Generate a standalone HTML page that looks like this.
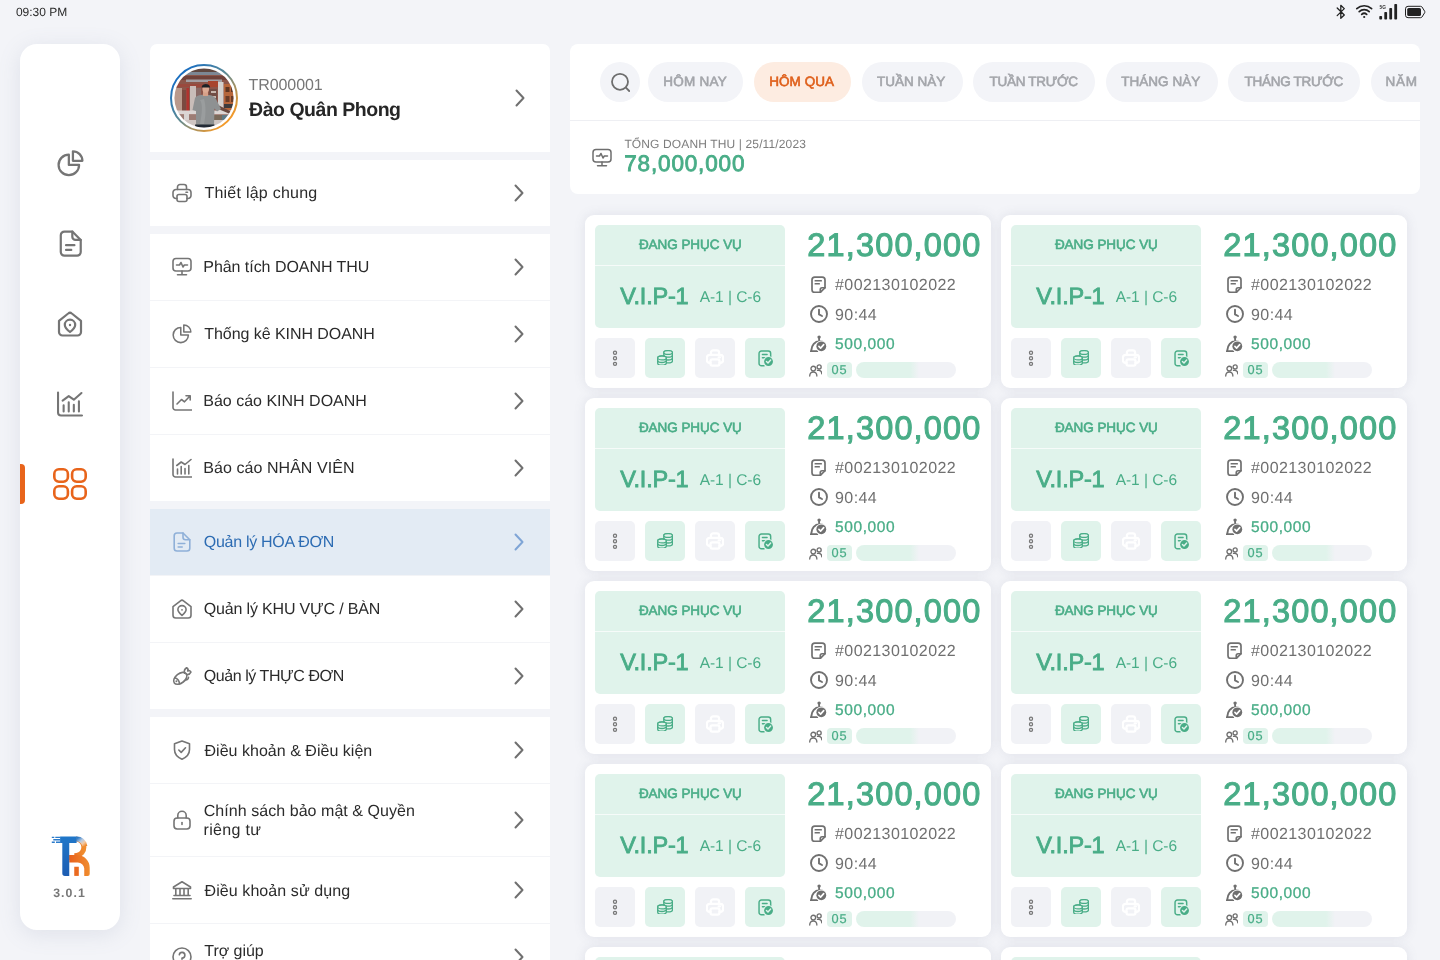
<!DOCTYPE html>
<html lang="vi"><head><meta charset="utf-8"><title>Quản lý hóa đơn</title>
<style>
*{box-sizing:border-box;margin:0;padding:0}
html,body{width:1440px;height:960px;overflow:hidden}
body{background:#f3f4f8;font-family:"Liberation Sans","DejaVu Sans",sans-serif;color:#2b2b2b;position:relative}
#root{position:absolute;left:0;top:0;width:1440px;height:960px;will-change:transform}
.abs{position:absolute}
.t{position:absolute;white-space:nowrap;line-height:1;text-rendering:geometricPrecision}
.side{left:20px;top:44px;width:100px;height:886px;border-radius:17px;background:#fff;box-shadow:0 4px 22px rgba(120,130,160,.16)}
.menu{left:150px;width:400px;background:#fff}
.row{position:absolute;left:150px;width:400px;background:#fff}
.row.hl{background:#e3ebf4}
.row svg.ic{position:absolute;left:22px}
.chev{position:absolute;left:364px}
.hdr{left:570px;top:44px;width:850px;height:150px;background:#fff;border-radius:8px;overflow:hidden}
.chip{position:absolute;top:18px;height:40px;border-radius:20px;background:#f3f4f8;color:#a3a5aa;font-size:14px}
.chip.on{background:#fdece1;color:#df5f1a}
.card{position:absolute;width:406px;height:173px;background:#fff;border-radius:9px;box-shadow:0 0 12px rgba(100,108,135,.135)}
.gb{position:absolute;left:10px;top:10px;width:190px;height:103px;border-radius:5px;background:#e0f3eb}
.gb i{position:absolute;left:0;top:40px;width:190px;height:1px;background:#f6fbf9}
.btn{position:absolute;top:123px;width:40px;height:40px;border-radius:5px}
.btn svg{position:absolute}
.md{font-weight:normal;-webkit-text-stroke:.45px currentColor}
.green{color:#49ad87}
.gray{color:#707070}
</style></head>
<body>
<div id="root">
<div class="t" id="time" style="left:15.90px;top:6.04px;font-size:12px;letter-spacing:-0.007px;color:#2b2b2b">09:30 PM</div>
<svg width="100" height="24" viewBox="0 0 100 24" style="position:absolute;left:1330px;top:0"><g fill="none" stroke="#222" stroke-width="1.300" stroke-linecap="round" stroke-linejoin="round"><path d="M7.200 8 L14.300 15 L10.800 18.300 V5.300 L14.300 8.600 L7.200 15.600"/></g><g fill="none" stroke="#222" stroke-width="1.700" stroke-linecap="round"><path d="M26.800 8.600 A11 11 0 0 1 41.600 8.600"/><path d="M29.200 11.600 A7.300 7.300 0 0 1 39.200 11.600"/><path d="M31.700 14.400 A3.700 3.700 0 0 1 36.700 14.400"/></g><circle cx="34.200" cy="17" r="1.100" fill="#222"/><g fill="#222"><rect x="49.300" y="16" width="2.800" height="3.600" rx="0.800"/><rect x="54.300" y="12" width="2.800" height="7.600" rx="0.800"/><rect x="59.300" y="8" width="2.800" height="11.600" rx="0.800"/><rect x="64.300" y="4" width="2.800" height="15.600" rx="0.800"/></g><text x="49.600" y="9.300" font-family="Liberation Sans, sans-serif" font-size="4.800" font-weight="bold" fill="#333">5G</text><path d="M78 6.300 H90.500 A2 2 0 0 1 92 7 L94.700 11.300 A1.200 1.200 0 0 1 94.700 12.700 L92 17 A2 2 0 0 1 90.500 17.700 H78 A2.500 2.500 0 0 1 75.500 15.200 V8.800 A2.500 2.500 0 0 1 78 6.300 Z" fill="none" stroke="#222" stroke-width="1"/><rect x="77.200" y="8" width="13.800" height="8" rx="1.600" fill="#222"/></svg>
<div class="abs side"></div>
<div class="abs" style="left:20px;top:464px;width:5px;height:40px;background:#e8641b;border-radius:0 4px 4px 0"></div>
<svg width="27" height="27" viewBox="0 0 24 24.500" style="position:absolute;left:56.500px;top:150px"><g fill="none" stroke="#757575" stroke-width="2.05" stroke-linejoin="round" stroke-linecap="round"><path d="M10.5 4.2 A9.3 9.3 0 1 0 19.8 13.5 H10.5 Z"/><path d="M14.2 1.2 A8.6 8.6 0 0 1 22.8 9.8 H14.2 Z"/></g></svg>
<svg width="25.5" height="27.3" viewBox="0 0 24 26" style="position:absolute;left:58px;top:230.100px"><g fill="none" stroke="#757575" stroke-width="2.1" stroke-linejoin="round" stroke-linecap="round"><path d="M13.5 1.5 H6 A3.5 3.5 0 0 0 2.5 5 V21 A3.5 3.5 0 0 0 6 24.5 H18 A3.5 3.5 0 0 0 21.500 21 V9.5 Z"/><path d="M13.5 1.5 V6.5 A3 3 0 0 0 16.5 9.5 H21.5"/><path d="M7.500 14.5 H15.5 M7.500 19 H12.5"/></g></svg>
<svg width="26" height="26" viewBox="0 0 26 26" style="position:absolute;left:57px;top:310.500px"><g fill="none" stroke="#757575" stroke-width="2.2" stroke-linejoin="round" stroke-linecap="round"><path d="M2 9.800 L11.2 2.500 A2.800 2.800 0 0 1 14.800 2.500 L24 9.800 V21 A3.500 3.500 0 0 1 20.500 24.500 H5.500 A3.500 3.500 0 0 1 2 21 Z"/><path d="M13 21 C9.600 18.200 7.800 16.400 7.800 13.900 A5.200 5.200 0 0 1 18.200 13.900 C18.200 16.400 16.400 18.200 13 21 Z"/><circle cx="13" cy="14" r="1.200" fill="#757575" stroke="none"/></g></svg>
<svg width="27.5" height="26" viewBox="0 0 27 25.500" style="position:absolute;left:55.500px;top:390.500px"><g fill="none" stroke="#757575" stroke-width="2.05" stroke-linejoin="round" stroke-linecap="round"><path d="M2 1.500 V21 A3 3 0 0 0 5 24 H25.500"/><path d="M7.500 14 V20 M12.5 11 V20 M17.5 13.5 V20 M22.5 10 V20"/><path d="M6.500 9.500 L12.5 5 L17.5 8.500 L25 2"/></g></svg>
<svg width="34" height="32" viewBox="0 0 34 32" style="position:absolute;left:53px;top:467.500px"><g fill="none" stroke="#e8641b" stroke-width="2.6"><rect x="1.3" y="1.3" width="13.6" height="12.4" rx="4.600" ry="4.600"/><rect x="19.1" y="1.3" width="13.6" height="12.4" rx="4.600" ry="4.600"/><rect x="1.3" y="18.3" width="13.6" height="12.4" rx="4.600" ry="4.600"/><rect x="19.1" y="18.3" width="13.6" height="12.4" rx="4.600" ry="4.600"/></g></svg>
<svg width="40" height="42" viewBox="0 0 40 42" style="position:absolute;left:50.500px;top:834.500px"><defs><linearGradient id="lb" x1="0" y1="0" x2="0" y2="1"><stop offset="0" stop-color="#2077c9"/><stop offset="1" stop-color="#1d5db2"/></linearGradient><linearGradient id="lo" x1="0" y1="0" x2="1" y2="0"><stop offset="0" stop-color="#e8601c"/><stop offset="1" stop-color="#f08d2e"/></linearGradient><linearGradient id="lw" x1="0" y1="0" x2="1" y2="1"><stop offset="0" stop-color="#2d7bc8"/><stop offset="0.400" stop-color="#b9cbe2"/><stop offset="0.700" stop-color="#f3c9a2"/><stop offset="1" stop-color="#ef8a2e"/></linearGradient></defs><path d="M25.300 4.100 A8.200 8.200 0 0 1 25.800 20.400 L25.800 22.600 H18.250" fill="none" stroke="url(#lo)" stroke-width="5"/><path d="M25.300 4.100 A8.100 8.100 0 0 1 33.900 11.300" fill="none" stroke="url(#lw)" stroke-width="5"/><path d="M18.250 20.100 H26 A12.700 12.700 0 0 1 38.700 32.800 V38.900 A2 2 0 0 1 36.700 40.900 H33.250 V33.500 A6.500 6.500 0 0 0 26.750 27.500 H18.250 Z" fill="url(#lo)"/><rect x="23.250" y="31.750" width="4.550" height="9.150" fill="#ea6a20"/><path d="M9.100 1.600 H25.600 V8 H18.250 V40.900 H14 A2.700 2.700 0 0 1 11.300 38.200 V8 H9.100 Z" fill="url(#lb)"/><path d="M0.800 2.400 H3.300 M4.300 2.400 H9.100 M2.300 4.800 H9.100 M0.800 7.200 H3.800 M5 7.200 H9.100" stroke="#2a7bcb" stroke-width="1.400"/></svg>
<div class="t" id="ver" style="left:53.20px;top:887.00px;font-size:12.3px;letter-spacing:1.088px;font-weight:bold;color:#777">3.0.1</div>
<div class="row" style="top:44px;height:108px;border-radius:7px 7px 0 0"></div>
<svg width="68" height="68" viewBox="0 0 68 68" style="position:absolute;left:170px;top:64px"><defs><linearGradient id="rg" x1="0.150" y1="0.150" x2="0.850" y2="0.850"><stop offset="0" stop-color="#1b6fc0"/><stop offset="0.450" stop-color="#5a8a96"/><stop offset="1" stop-color="#f39a2a"/></linearGradient><clipPath id="av"><circle cx="34" cy="34" r="29.600"/></clipPath><filter id="bl" x="-10%" y="-10%" width="120%" height="120%"><feGaussianBlur stdDeviation="0.700"/></filter><filter id="bl2" x="-10%" y="-10%" width="120%" height="120%"><feGaussianBlur stdDeviation="0.350"/></filter></defs><circle cx="34" cy="34" r="33" fill="none" stroke="url(#rg)" stroke-width="2"/><g clip-path="url(#av)"><g filter="url(#bl)"><rect x="0" y="0" width="68" height="68" fill="#8c5548"/><rect x="0" y="2" width="68" height="9" fill="#5e4640"/><rect x="14" y="8" width="40" height="3" fill="#7c8794"/><rect x="10" y="12" width="48" height="4" fill="#70433a"/><rect x="16" y="15.500" width="36" height="2.500" fill="#a3a0a4"/><rect x="4" y="20" width="64" height="3" fill="#9a4a3c"/><rect x="4" y="24" width="8" height="26" fill="#b9998c"/><rect x="12" y="26" width="4" height="24" fill="#7a4a40"/><rect x="16.500" y="24" width="2.500" height="26" fill="#b0322e"/><rect x="20" y="22" width="6" height="26" fill="#c9bdb9"/><rect x="26" y="24" width="5" height="22" fill="#8a6a66"/><rect x="38" y="17" width="10" height="6" fill="#a8452f"/><rect x="39" y="25" width="8" height="20" fill="#6f4d44"/><rect x="41" y="27" width="5" height="2" fill="#c7b7ae"/><rect x="41" y="32" width="5" height="2" fill="#c7b7ae"/><rect x="48" y="18" width="5.500" height="30" fill="#d4d0cd"/><rect x="54" y="20" width="14" height="26" fill="#b6663a"/><rect x="55.500" y="23" width="4" height="5" fill="#5e3424"/><rect x="61" y="23" width="4" height="5" fill="#5e3424"/><rect x="55.500" y="32" width="4" height="6" fill="#6b3a26"/><rect x="61" y="32" width="4" height="6" fill="#6b3a26"/><rect x="54" y="40" width="14" height="4" fill="#3e3a3c"/><rect x="0" y="46.500" width="68" height="4" fill="#dcd6d4"/><rect x="0" y="50.500" width="68" height="6" fill="#9d7d74"/><rect x="38" y="51" width="14" height="5" fill="#7a6a5a"/><rect x="52" y="51" width="10" height="5" fill="#5f7a86"/><rect x="14" y="50" width="5" height="14" fill="#d9d4d2"/><rect x="4" y="56" width="60" height="10" fill="#cfc6c3"/></g><g filter="url(#bl2)"><path d="M48 41 L61 47.500 L60 50 L46 44 Z" fill="#6a4a40"/><path d="M25 34 C27 31.200 31 30.700 35.500 30.700 C40 30.700 44 31.500 46 35 L51 45 L47 47.500 L44.500 44.500 L44 61.500 L26 61.500 L26 47 L22.500 46 Z" fill="#8e9192"/><path d="M30 36 C33 40 32 50 30 60 L34 60 C36 50 36 42 34 35 Z" fill="#9a9d9e"/><path d="M25 60.500 H44.500 V68 H25.500 Z" fill="#232c36"/><rect x="33" y="25" width="5" height="7" fill="#d6a088"/><ellipse cx="35.700" cy="24.800" rx="3.300" ry="4" fill="#ddab94"/><path d="M31.800 22.800 C32.200 19.300 38.800 19.300 39.800 22.300 L40.200 23.400 L31.800 23.400 Z" fill="#1f2428"/></g></g></svg>
<div class="t" id="pid" style="left:248.55px;top:77.50px;font-size:16px;letter-spacing:-0.079px;color:#777">TR000001</div>
<div class="t" id="pname" style="left:249.05px;top:101.10px;font-size:19.5px;letter-spacing:-0.477px;font-weight:bold;color:#262626">Đào Quân Phong</div>
<div class="abs" style="left:515px;top:89px"><svg width="10" height="18" viewBox="0 0 10 18" style=""><path d="M1.500 1.500 L8.500 9 L1.500 16.500" fill="none" stroke="#707070" stroke-width="2" stroke-linecap="round" stroke-linejoin="round"/></svg></div>
<div class="row" style="top:160px;height:66px"></div>
<svg width="20" height="20" viewBox="0 0 20 20" style="position:absolute;left:172px;top:183.0px"><g fill="none" stroke="#757575" stroke-width="1.6" stroke-linejoin="round" stroke-linecap="round"><path d="M5.500 6.500 V4 A2.500 2.500 0 0 1 8 1.500 H12 A2.500 2.500 0 0 1 14.500 4 V6.500"/><path d="M5 15.5 H4 A3 3 0 0 1 1 12.5 V9.500 A3 3 0 0 1 4 6.500 H16 A3 3 0 0 1 19 9.500 V12.5 A3 3 0 0 1 16 15.5 H15"/><rect x="5" y="11.5" width="10" height="7" rx="2"/><path d="M14 9.300 H15.500"/></g></svg>
<div class="t" id="m1" style="left:204.40px;top:186.06px;font-size:16px;letter-spacing:0.246px;color:#2b2b2b">Thiết lập chung</div>
<div class="abs" style="left:514px;top:184.0px"><svg width="10" height="18" viewBox="0 0 10 18" style=""><path d="M1.500 1.500 L8.500 9 L1.500 16.500" fill="none" stroke="#707070" stroke-width="2" stroke-linecap="round" stroke-linejoin="round"/></svg></div>
<div class="row" style="top:234px;height:66px"></div>
<svg width="20" height="20" viewBox="0 0 20 20" style="position:absolute;left:172px;top:257.0px"><g fill="none" stroke="#757575" stroke-width="1.6" stroke-linejoin="round" stroke-linecap="round"><rect x="1" y="1.500" width="18" height="12.5" rx="3"/><path d="M10 14 V17.500 M5.500 17.800 H14.500"/><path d="M4.500 8 H7.500 L9 5.500 L11 10 L12.3 8 H15.500"/></g></svg>
<div class="t" id="m2" style="left:203.25px;top:260.06px;font-size:16px;letter-spacing:-0.042px;color:#2b2b2b">Phân tích DOANH THU</div>
<div class="abs" style="left:514px;top:258.0px"><svg width="10" height="18" viewBox="0 0 10 18" style=""><path d="M1.500 1.500 L8.500 9 L1.500 16.500" fill="none" stroke="#707070" stroke-width="2" stroke-linecap="round" stroke-linejoin="round"/></svg></div>
<div class="row" style="top:301px;height:66px"></div>
<svg width="20" height="20" viewBox="0 0 24 24.500" style="position:absolute;left:172px;top:324.0px"><g fill="none" stroke="#757575" stroke-width="1.9" stroke-linejoin="round" stroke-linecap="round"><path d="M10.5 4.2 A9.3 9.3 0 1 0 19.8 13.5 H10.5 Z"/><path d="M14.2 1.2 A8.6 8.6 0 0 1 22.8 9.8 H14.2 Z"/></g></svg>
<div class="t" id="m3" style="left:204.25px;top:327.06px;font-size:16px;letter-spacing:-0.056px;color:#2b2b2b">Thống kê KINH DOANH</div>
<div class="abs" style="left:514px;top:325.0px"><svg width="10" height="18" viewBox="0 0 10 18" style=""><path d="M1.500 1.500 L8.500 9 L1.500 16.500" fill="none" stroke="#707070" stroke-width="2" stroke-linecap="round" stroke-linejoin="round"/></svg></div>
<div class="row" style="top:368px;height:66px"></div>
<svg width="20" height="20" viewBox="0 0 20 20" style="position:absolute;left:172px;top:391.0px"><g fill="none" stroke="#757575" stroke-width="1.6" stroke-linejoin="round" stroke-linecap="round"><path d="M1 1 V16.500 A2.500 2.500 0 0 0 3.500 19 H19.5"/><path d="M5 13 L9.500 8.500 L12.5 10.800 L18 5 M14 4.800 H18.2 V9"/></g></svg>
<div class="t" id="m4" style="left:203.25px;top:394.06px;font-size:16px;color:#2b2b2b">Báo cáo KINH DOANH</div>
<div class="abs" style="left:514px;top:392.0px"><svg width="10" height="18" viewBox="0 0 10 18" style=""><path d="M1.500 1.500 L8.500 9 L1.500 16.500" fill="none" stroke="#707070" stroke-width="2" stroke-linecap="round" stroke-linejoin="round"/></svg></div>
<div class="row" style="top:435px;height:66px"></div>
<svg width="20" height="20" viewBox="0 0 20 20" style="position:absolute;left:172px;top:458.0px"><g fill="none" stroke="#757575" stroke-width="1.6" stroke-linejoin="round" stroke-linecap="round"><path d="M1 1 V16.500 A2.500 2.500 0 0 0 3.500 19 H19.5"/><path d="M5.500 11 V16 M9.200 8.500 V16 M13 10.500 V16 M16.800 7.500 V16"/><path d="M4.800 7.500 L9.200 4 L13 6.500 L19 1.500"/></g></svg>
<div class="t" id="m5" style="left:203.25px;top:461.06px;font-size:16px;letter-spacing:0.062px;color:#2b2b2b">Báo cáo NHÂN VIÊN</div>
<div class="abs" style="left:514px;top:459.0px"><svg width="10" height="18" viewBox="0 0 10 18" style=""><path d="M1.500 1.500 L8.500 9 L1.500 16.500" fill="none" stroke="#707070" stroke-width="2" stroke-linecap="round" stroke-linejoin="round"/></svg></div>
<div class="row hl" style="top:509px;height:66px"></div>
<svg width="20" height="20" viewBox="0 0 20 20" style="position:absolute;left:172px;top:532.0px"><g fill="none" stroke="#8fb0d8" stroke-width="1.6" stroke-linejoin="round" stroke-linecap="round"><path d="M11 1 H5 A2.800 2.800 0 0 0 2.200 3.800 V16.200 A2.800 2.800 0 0 0 5 19 H15 A2.800 2.800 0 0 0 17.800 16.200 V7.800 Z"/><path d="M11 1 V5.300 A2.500 2.500 0 0 0 13.500 7.800 H17.800"/><path d="M6.200 11.5 H12.8 M6.200 15 H10.200"/></g></svg>
<div class="t" id="m6" style="left:203.75px;top:535.06px;font-size:16px;letter-spacing:-0.286px;color:#2d6cb3">Quản lý HÓA ĐƠN</div>
<div class="abs" style="left:514px;top:533.0px"><svg width="10" height="18" viewBox="0 0 10 18" style=""><path d="M1.500 1.500 L8.500 9 L1.500 16.500" fill="none" stroke="#7fa5d6" stroke-width="2" stroke-linecap="round" stroke-linejoin="round"/></svg></div>
<div class="row" style="top:576px;height:66px"></div>
<svg width="20" height="20" viewBox="0 0 20 20" style="position:absolute;left:172px;top:599.0px"><g fill="none" stroke="#757575" stroke-width="1.6" stroke-linejoin="round" stroke-linecap="round"><path d="M1 7.600 L8.500 1.800 A2.400 2.400 0 0 1 11.500 1.800 L19 7.600 V16.200 A2.800 2.800 0 0 1 16.200 19 H3.800 A2.800 2.800 0 0 1 1 16.200 Z"/><path d="M10 16.300 C7.300 14 5.900 12.600 5.900 10.700 A4.100 4.100 0 0 1 14.100 10.700 C14.100 12.600 12.700 14 10 16.300 Z"/><circle cx="10" cy="10.800" r="0.900" fill="#757575" stroke="none"/></g></svg>
<div class="t" id="m7" style="left:203.75px;top:602.06px;font-size:16px;letter-spacing:-0.163px;color:#2b2b2b">Quản lý KHU VỰC / BÀN</div>
<div class="abs" style="left:514px;top:600.0px"><svg width="10" height="18" viewBox="0 0 10 18" style=""><path d="M1.500 1.500 L8.500 9 L1.500 16.500" fill="none" stroke="#707070" stroke-width="2" stroke-linecap="round" stroke-linejoin="round"/></svg></div>
<div class="row" style="top:643px;height:66px"></div>
<svg width="20" height="20" viewBox="0 0 20 20" style="position:absolute;left:172px;top:666.0px"><g fill="none" stroke="#757575" stroke-width="1.6" stroke-linejoin="round" stroke-linecap="round"><g transform="rotate(-38 8.300 12.300)"><ellipse cx="8.300" cy="12.300" rx="7.600" ry="4.700"/><path d="M4.300 8.400 C5.900 10.800 5.900 13.800 4.300 16.200"/></g><path d="M12.600 7.300 C11.900 5 12.700 2.900 14.600 1.700 C15.900 2.300 16.300 3.600 15.700 5 C17 4.300 18.400 4.700 18.900 6.100 C18 8 16.200 8.900 14.300 8.500"/><path d="M13.700 13.900 C15.300 14 16.400 13 16.500 11.300"/><circle cx="4.400" cy="15.300" r="0.950" fill="#757575" stroke="none"/></g></svg>
<div class="t" id="m8" style="left:203.75px;top:669.06px;font-size:16px;letter-spacing:-0.433px;color:#2b2b2b">Quản lý THỰC ĐƠN</div>
<div class="abs" style="left:514px;top:667.0px"><svg width="10" height="18" viewBox="0 0 10 18" style=""><path d="M1.500 1.500 L8.500 9 L1.500 16.500" fill="none" stroke="#707070" stroke-width="2" stroke-linecap="round" stroke-linejoin="round"/></svg></div>
<div class="row" style="top:717px;height:66px"></div>
<svg width="20" height="20" viewBox="0 0 20 20" style="position:absolute;left:172px;top:740.0px"><g fill="none" stroke="#757575" stroke-width="1.6" stroke-linejoin="round" stroke-linecap="round"><path d="M10 1 L17.500 3.800 V9.500 C17.500 14 14.500 17.300 10 19.200 C5.500 17.300 2.500 14 2.500 9.500 V3.800 Z"/><path d="M6.800 10 L9.200 12.400 L13.500 7.800"/></g></svg>
<div class="t" id="m9" style="left:204.50px;top:743.86px;font-size:16px;letter-spacing:0.024px;color:#2b2b2b">Điều khoản &amp; Điều kiện</div>
<div class="abs" style="left:514px;top:741.0px"><svg width="10" height="18" viewBox="0 0 10 18" style=""><path d="M1.500 1.500 L8.500 9 L1.500 16.500" fill="none" stroke="#707070" stroke-width="2" stroke-linecap="round" stroke-linejoin="round"/></svg></div>
<div class="row" style="top:784px;height:72px"></div>
<svg width="20" height="20" viewBox="0 0 20 20" style="position:absolute;left:172px;top:810.0px"><g fill="none" stroke="#757575" stroke-width="1.6" stroke-linejoin="round" stroke-linecap="round"><rect x="2" y="8" width="16" height="11" rx="3.200"/><path d="M5.800 8 V5.500 A4.200 4.200 0 0 1 14.200 5.500 V8"/><path d="M10 12.500 V14.500"/></g></svg>
<div class="t" id="m10" style="left:203.75px;top:803.70px;font-size:16px;letter-spacing:0.050px;color:#2b2b2b">Chính sách bảo mật &amp; Quyền</div>
<div class="t" id="m10b" style="left:203.50px;top:823.20px;font-size:16px;letter-spacing:0.321px;color:#2b2b2b">riêng tư</div>
<div class="abs" style="left:514px;top:811.0px"><svg width="10" height="18" viewBox="0 0 10 18" style=""><path d="M1.500 1.500 L8.500 9 L1.500 16.500" fill="none" stroke="#707070" stroke-width="2" stroke-linecap="round" stroke-linejoin="round"/></svg></div>
<div class="row" style="top:857px;height:66px"></div>
<svg width="20" height="20" viewBox="0 0 20 20" style="position:absolute;left:172px;top:880.0px"><g fill="none" stroke="#757575" stroke-width="1.6" stroke-linejoin="round" stroke-linecap="round"><path d="M1.500 7 L10 1.800 L18.500 7 V8.500 H1.500 Z"/><path d="M3.800 9 V15 M8 9 V15 M12 9 V15 M16.200 9 V15 M2 15.500 H18 M0.800 18.800 H19.200"/></g></svg>
<div class="t" id="m11" style="left:204.50px;top:883.86px;font-size:16px;letter-spacing:0.088px;color:#2b2b2b">Điều khoản sử dụng</div>
<div class="abs" style="left:514px;top:881.0px"><svg width="10" height="18" viewBox="0 0 10 18" style=""><path d="M1.500 1.500 L8.500 9 L1.500 16.500" fill="none" stroke="#707070" stroke-width="2" stroke-linecap="round" stroke-linejoin="round"/></svg></div>
<div class="row" style="top:924px;height:52px"></div>
<svg width="20" height="20" viewBox="0 0 20 20" style="position:absolute;left:172px;top:947px"><g fill="none" stroke="#757575" stroke-width="1.6" stroke-linejoin="round" stroke-linecap="round"><circle cx="10" cy="10" r="9"/><path d="M7.300 7.800 A2.800 2.800 0 1 1 10 11 V12.200"/><circle cx="10" cy="15" r="0.600" fill="#757575"/></g></svg>
<div class="t" id="m12" style="left:204.25px;top:943.70px;font-size:16px;letter-spacing:-0.036px;color:#2b2b2b">Trợ giúp</div>
<div class="abs" style="left:514px;top:948px"><svg width="10" height="18" viewBox="0 0 10 18" style=""><path d="M1.500 1.500 L8.500 9 L1.500 16.500" fill="none" stroke="#707070" stroke-width="2" stroke-linecap="round" stroke-linejoin="round"/></svg></div>
<div class="abs" style="left:150px;top:300px;width:400px;height:1px;background:#f3f4f7"></div>
<div class="abs" style="left:150px;top:367px;width:400px;height:1px;background:#f3f4f7"></div>
<div class="abs" style="left:150px;top:434px;width:400px;height:1px;background:#f3f4f7"></div>
<div class="abs" style="left:150px;top:575px;width:400px;height:1px;background:#f3f4f7"></div>
<div class="abs" style="left:150px;top:642px;width:400px;height:1px;background:#f3f4f7"></div>
<div class="abs" style="left:150px;top:783px;width:400px;height:1px;background:#f3f4f7"></div>
<div class="abs" style="left:150px;top:856px;width:400px;height:1px;background:#f3f4f7"></div>
<div class="abs" style="left:150px;top:923px;width:400px;height:1px;background:#f3f4f7"></div>
<div class="abs hdr">
<div class="abs" style="left:30px;top:18px;width:40px;height:40px;border-radius:20px;background:#f3f4f8"></div>
<svg width="22" height="22" viewBox="0 0 22 22" style="position:absolute;left:40px;top:28px"><g fill="none" stroke="#6e6e6e" stroke-width="1.800" stroke-linecap="round"><circle cx="10" cy="9.800" r="8"/><path d="M15.900 15.700 L19.200 19"/></g></svg>
<div class="chip" style="left:78px;width:95px"><span class="t md" id="c1" style="left:15.25px;top:13.00px;font-size:13.5px;letter-spacing:0.233px;-webkit-text-stroke-width:.6px">HÔM NAY</span></div>
<div class="chip on" style="left:184px;width:96.5px"><span class="t md" id="c2" style="left:15.25px;top:13.00px;font-size:13.5px;letter-spacing:0.042px;-webkit-text-stroke-width:.6px">HÔM QUA</span></div>
<div class="chip" style="left:291.5px;width:101px"><span class="t md" id="c3" style="left:15.50px;top:13.00px;font-size:13.5px;-webkit-text-stroke-width:.6px">TUẦN NÀY</span></div>
<div class="chip" style="left:403px;width:122px"><span class="t md" id="c4" style="left:16.50px;top:13.00px;font-size:13.5px;letter-spacing:-0.278px;-webkit-text-stroke-width:.6px">TUẦN TRƯỚC</span></div>
<div class="chip" style="left:535.5px;width:112px"><span class="t md" id="c5" style="left:15.75px;top:13.00px;font-size:13.5px;letter-spacing:0.031px;-webkit-text-stroke-width:.6px">THÁNG NÀY</span></div>
<div class="chip" style="left:658px;width:132px"><span class="t md" id="c6" style="left:16.50px;top:13.00px;font-size:13.5px;letter-spacing:-0.275px;-webkit-text-stroke-width:.6px">THÁNG TRƯỚC</span></div>
<div class="chip" style="left:800.5px;width:100px"><span class="t md" id="c7" style="left:15.00px;top:13.00px;font-size:13.5px;letter-spacing:0.800px;-webkit-text-stroke-width:.6px">NĂM NAY</span></div>
<div class="abs" style="left:0;top:76px;width:850px;height:1px;background:#eeeff3"></div>
<svg width="20" height="20" viewBox="0 0 20 20" style="position:absolute;left:21.500px;top:103.500px"><g fill="none" stroke="#6e6e6e" stroke-width="1.5" stroke-linejoin="round" stroke-linecap="round"><rect x="1" y="1.500" width="18" height="12.5" rx="3"/><path d="M10 14 V17.500 M5.500 17.800 H14.500"/><path d="M4.500 8 H7.500 L9 5.500 L11 10 L12.3 8 H15.500"/></g></svg>
<div class="t" id="h1" style="left:54.40px;top:93.84px;font-size:12px;letter-spacing:0.131px;color:#7d7d7d">TỔNG DOANH THU | 25/11/2023</div>
<div class="t green md" id="h2" style="left:54.15px;top:109.25px;font-size:22.5px;letter-spacing:0.861px;-webkit-text-stroke-width:.85px">78,000,000</div>
</div>
<div class="card" style="left:585px;top:215px"><div class="gb"><i></i><span class="t green md k1" style="left:43.90px;top:13.27px;font-size:13.5px;letter-spacing:-0.050px;-webkit-text-stroke-width:.6px">ĐANG PHỤC VỤ</span><span class="t green md k2" style="left:25.15px;top:59.60px;font-size:23.5px;letter-spacing:-0.192px;-webkit-text-stroke-width:.85px">V.I.P-1</span><span class="t green k3" style="left:104.65px;top:65.40px;font-size:15.5px;letter-spacing:-0.038px;">A-1 | C-6</span></div><div class="btn" style="left:10px;background:#f1f2f6"><svg width="6" height="16.5" viewBox="0 0 6 16.500" style="left:17px;top:11.550px"><g fill="none" stroke="#767676" stroke-width="1.250"><circle cx="3" cy="2.700" r="1.550"/><circle cx="3" cy="8.250" r="1.550"/><circle cx="3" cy="13.800" r="1.550"/></g></svg></div><div class="btn" style="left:60px;background:#e0f3eb"><svg width="16" height="15" viewBox="0 0 16 15" style="left:12px;top:12.400px"><g fill="none" stroke="#49ad87" stroke-width="1.3" stroke-linejoin="round"><path d="M6.8 2.5 V10.899999999999999 A4.3 1.9 0 0 0 15.399999999999999 10.899999999999999 V2.5 A4.3 1.9 0 0 0 6.8 2.5 Z" fill="#e0f3eb"/><ellipse cx="11.1" cy="2.5" rx="4.3" ry="1.9" fill="#e0f3eb"/><path d="M6.8 5.3 A4.3 1.9 0 0 0 15.399999999999999 5.3"/><path d="M6.8 8.1 A4.3 1.9 0 0 0 15.399999999999999 8.1"/><path d="M0.7000000000000002 7.9 V13.3 A4.3 1.9 0 0 0 9.3 13.3 V7.9 A4.3 1.9 0 0 0 0.7000000000000002 7.9 Z" fill="#e0f3eb"/><ellipse cx="5" cy="7.9" rx="4.3" ry="1.9" fill="#e0f3eb"/><path d="M0.7000000000000002 10.600000000000001 A4.3 1.9 0 0 0 9.3 10.600000000000001"/></g></svg></div><div class="btn" style="left:110px;background:#f1f2f6"><svg width="18" height="18" viewBox="0 0 20 20" style="left:11px;top:11px"><g fill="none" stroke="#fff" stroke-width="2.5" stroke-linejoin="round" stroke-linecap="round"><path d="M5.500 6.500 V4 A2.500 2.500 0 0 1 8 1.500 H12 A2.500 2.500 0 0 1 14.500 4 V6.500"/><path d="M5 15.5 H4 A3 3 0 0 1 1 12.5 V9.500 A3 3 0 0 1 4 6.500 H16 A3 3 0 0 1 19 9.500 V12.5 A3 3 0 0 1 16 15.5 H15"/><rect x="5" y="11.5" width="10" height="7" rx="2"/><path d="M14 9.300 H15.500"/></g></svg></div><div class="btn" style="left:160px;background:#e0f3eb"><svg width="16.5" height="17.5" viewBox="0 0 16 17" style="left:12.500px;top:11.600px"><g fill="none" stroke="#49ad87" stroke-width="1.4" stroke-linejoin="round" stroke-linecap="round"><path d="M6 15.300 H3.300 A2.300 2.300 0 0 1 1 13 V3.300 A2.300 2.300 0 0 1 3.300 1 H10 A2.300 2.300 0 0 1 12.300 3.300 V7"/><path d="M4.300 4.300 H8.800"/><path d="M4.300 7.600 H8.300 V10"/></g><circle cx="10.200" cy="11.200" r="5.300" fill="#e0f3eb"/><circle cx="10.200" cy="11.200" r="4.300" fill="#49ad87"/><path d="M8.200 11.200 L9.700 12.700 L12.300 9.800" fill="none" stroke="#e0f3eb" stroke-width="1.400" stroke-linecap="round" stroke-linejoin="round"/></svg></div><span class="t green md k4" style="left:222.35px;top:13.70px;font-size:32.5px;letter-spacing:1.144px;-webkit-text-stroke-width:1.05px">21,300,000</span><svg width="15" height="17.5" viewBox="0 0 15 17.200" style="position:absolute;left:226px;top:60.500px"><g fill="none" stroke="#707070" stroke-width="1.7" stroke-linejoin="round" stroke-linecap="round"><path d="M9.300 16.300 H3.800 A2.800 2.800 0 0 1 1 13.500 V3.800 A2.800 2.800 0 0 1 3.800 1 H11.2 A2.800 2.800 0 0 1 14 3.800 V11.6 Z"/><path d="M9.300 16.300 V13.400 A1.800 1.800 0 0 1 11.100 11.600 H14"/><path d="M4.300 4.600 H10.200 M4.300 7.600 H8.200"/></g></svg><span class="t gray k5" style="left:250.00px;top:63.20px;font-size:16px;letter-spacing:0.417px;">#002130102022</span><svg width="18" height="18" viewBox="0 0 18 18" style="position:absolute;left:225px;top:90px"><g fill="none" stroke="#707070" stroke-width="1.9" stroke-linejoin="round" stroke-linecap="round"><circle cx="9" cy="9" r="8"/><path d="M9 4.800 V9.400 L12 11"/></g></svg><span class="t gray k6" style="left:250.10px;top:93.20px;font-size:16px;letter-spacing:0.375px;">90:44</span><svg width="17" height="17.5" viewBox="0 0 17 17.500" style="position:absolute;left:225px;top:119.600px"><g fill="none" stroke="#6f6f6f" stroke-linejoin="round" stroke-linecap="round"><path d="M1.300 15.400 A8.100 9.600 0 0 1 9.300 6.200 A8.100 9.600 0 0 1 14.500 8.200" stroke-width="1.900"/><path d="M9.100 6 V3" stroke-width="1.800"/><path d="M0.900 16.300 H7.200" stroke-width="1.900"/></g><circle cx="9.100" cy="2.100" r="1.700" fill="#6f6f6f"/><circle cx="11.300" cy="11.300" r="5.700" fill="#fff"/><circle cx="11.300" cy="11.300" r="4.900" fill="#6f6f6f"/><path d="M8.900 11.400 L10.600 13.100 L13.700 9.600" fill="none" stroke="#fff" stroke-width="1.600" stroke-linecap="round" stroke-linejoin="round"/></svg><span class="t green k7" style="left:250.00px;top:121.90px;font-size:15.5px;letter-spacing:0.608px;-webkit-text-stroke:.3px currentColor;">500,000</span><svg width="13.5" height="12.5" viewBox="0 0 13.200 12.200" style="position:absolute;left:223.500px;top:149px"><g fill="none" stroke="#707070" stroke-width="1.3" stroke-linejoin="round" stroke-linecap="round"><circle cx="4.200" cy="4.500" r="2.300"/><path d="M0.700 11.800 C0.700 9 2.200 7.800 4.200 7.800 C6.200 7.800 7.700 9 7.700 11.800"/><circle cx="9.900" cy="2.900" r="2"/><path d="M8.300 6.200 C10.900 5.700 12.500 7 12.500 9.600"/></g></svg><div class="abs" style="left:242px;top:147.200px;width:25px;height:15.600px;border-radius:4px;background:#e0f3eb"></div><span class="t green md k8" style="left:246.50px;top:149.20px;font-size:12.8px;letter-spacing:0.850px;-webkit-text-stroke-width:.2px">05</span><div class="abs" style="left:271px;top:147.200px;width:100px;height:15.600px;border-radius:8px;background:linear-gradient(90deg,#e0f3eb 0,#e0f3eb 54%,#f1f2f6 63%,#f1f2f6 100%)"></div></div>
<div class="card" style="left:1001px;top:215px"><div class="gb"><i></i><span class="t green md k1" style="left:43.90px;top:13.27px;font-size:13.5px;letter-spacing:-0.050px;-webkit-text-stroke-width:.6px">ĐANG PHỤC VỤ</span><span class="t green md k2" style="left:25.15px;top:59.60px;font-size:23.5px;letter-spacing:-0.192px;-webkit-text-stroke-width:.85px">V.I.P-1</span><span class="t green k3" style="left:104.65px;top:65.40px;font-size:15.5px;letter-spacing:-0.038px;">A-1 | C-6</span></div><div class="btn" style="left:10px;background:#f1f2f6"><svg width="6" height="16.5" viewBox="0 0 6 16.500" style="left:17px;top:11.550px"><g fill="none" stroke="#767676" stroke-width="1.250"><circle cx="3" cy="2.700" r="1.550"/><circle cx="3" cy="8.250" r="1.550"/><circle cx="3" cy="13.800" r="1.550"/></g></svg></div><div class="btn" style="left:60px;background:#e0f3eb"><svg width="16" height="15" viewBox="0 0 16 15" style="left:12px;top:12.400px"><g fill="none" stroke="#49ad87" stroke-width="1.3" stroke-linejoin="round"><path d="M6.8 2.5 V10.899999999999999 A4.3 1.9 0 0 0 15.399999999999999 10.899999999999999 V2.5 A4.3 1.9 0 0 0 6.8 2.5 Z" fill="#e0f3eb"/><ellipse cx="11.1" cy="2.5" rx="4.3" ry="1.9" fill="#e0f3eb"/><path d="M6.8 5.3 A4.3 1.9 0 0 0 15.399999999999999 5.3"/><path d="M6.8 8.1 A4.3 1.9 0 0 0 15.399999999999999 8.1"/><path d="M0.7000000000000002 7.9 V13.3 A4.3 1.9 0 0 0 9.3 13.3 V7.9 A4.3 1.9 0 0 0 0.7000000000000002 7.9 Z" fill="#e0f3eb"/><ellipse cx="5" cy="7.9" rx="4.3" ry="1.9" fill="#e0f3eb"/><path d="M0.7000000000000002 10.600000000000001 A4.3 1.9 0 0 0 9.3 10.600000000000001"/></g></svg></div><div class="btn" style="left:110px;background:#f1f2f6"><svg width="18" height="18" viewBox="0 0 20 20" style="left:11px;top:11px"><g fill="none" stroke="#fff" stroke-width="2.5" stroke-linejoin="round" stroke-linecap="round"><path d="M5.500 6.500 V4 A2.500 2.500 0 0 1 8 1.500 H12 A2.500 2.500 0 0 1 14.500 4 V6.500"/><path d="M5 15.5 H4 A3 3 0 0 1 1 12.5 V9.500 A3 3 0 0 1 4 6.500 H16 A3 3 0 0 1 19 9.500 V12.5 A3 3 0 0 1 16 15.5 H15"/><rect x="5" y="11.5" width="10" height="7" rx="2"/><path d="M14 9.300 H15.500"/></g></svg></div><div class="btn" style="left:160px;background:#e0f3eb"><svg width="16.5" height="17.5" viewBox="0 0 16 17" style="left:12.500px;top:11.600px"><g fill="none" stroke="#49ad87" stroke-width="1.4" stroke-linejoin="round" stroke-linecap="round"><path d="M6 15.300 H3.300 A2.300 2.300 0 0 1 1 13 V3.300 A2.300 2.300 0 0 1 3.300 1 H10 A2.300 2.300 0 0 1 12.300 3.300 V7"/><path d="M4.300 4.300 H8.800"/><path d="M4.300 7.600 H8.300 V10"/></g><circle cx="10.200" cy="11.200" r="5.300" fill="#e0f3eb"/><circle cx="10.200" cy="11.200" r="4.300" fill="#49ad87"/><path d="M8.200 11.200 L9.700 12.700 L12.300 9.800" fill="none" stroke="#e0f3eb" stroke-width="1.400" stroke-linecap="round" stroke-linejoin="round"/></svg></div><span class="t green md k4" style="left:222.35px;top:13.70px;font-size:32.5px;letter-spacing:1.144px;-webkit-text-stroke-width:1.05px">21,300,000</span><svg width="15" height="17.5" viewBox="0 0 15 17.200" style="position:absolute;left:226px;top:60.500px"><g fill="none" stroke="#707070" stroke-width="1.7" stroke-linejoin="round" stroke-linecap="round"><path d="M9.300 16.300 H3.800 A2.800 2.800 0 0 1 1 13.500 V3.800 A2.800 2.800 0 0 1 3.800 1 H11.2 A2.800 2.800 0 0 1 14 3.800 V11.6 Z"/><path d="M9.300 16.300 V13.400 A1.800 1.800 0 0 1 11.100 11.600 H14"/><path d="M4.300 4.600 H10.200 M4.300 7.600 H8.200"/></g></svg><span class="t gray k5" style="left:250.00px;top:63.20px;font-size:16px;letter-spacing:0.417px;">#002130102022</span><svg width="18" height="18" viewBox="0 0 18 18" style="position:absolute;left:225px;top:90px"><g fill="none" stroke="#707070" stroke-width="1.9" stroke-linejoin="round" stroke-linecap="round"><circle cx="9" cy="9" r="8"/><path d="M9 4.800 V9.400 L12 11"/></g></svg><span class="t gray k6" style="left:250.10px;top:93.20px;font-size:16px;letter-spacing:0.375px;">90:44</span><svg width="17" height="17.5" viewBox="0 0 17 17.500" style="position:absolute;left:225px;top:119.600px"><g fill="none" stroke="#6f6f6f" stroke-linejoin="round" stroke-linecap="round"><path d="M1.300 15.400 A8.100 9.600 0 0 1 9.300 6.200 A8.100 9.600 0 0 1 14.500 8.200" stroke-width="1.900"/><path d="M9.100 6 V3" stroke-width="1.800"/><path d="M0.900 16.300 H7.200" stroke-width="1.900"/></g><circle cx="9.100" cy="2.100" r="1.700" fill="#6f6f6f"/><circle cx="11.300" cy="11.300" r="5.700" fill="#fff"/><circle cx="11.300" cy="11.300" r="4.900" fill="#6f6f6f"/><path d="M8.900 11.400 L10.600 13.100 L13.700 9.600" fill="none" stroke="#fff" stroke-width="1.600" stroke-linecap="round" stroke-linejoin="round"/></svg><span class="t green k7" style="left:250.00px;top:121.90px;font-size:15.5px;letter-spacing:0.608px;-webkit-text-stroke:.3px currentColor;">500,000</span><svg width="13.5" height="12.5" viewBox="0 0 13.200 12.200" style="position:absolute;left:223.500px;top:149px"><g fill="none" stroke="#707070" stroke-width="1.3" stroke-linejoin="round" stroke-linecap="round"><circle cx="4.200" cy="4.500" r="2.300"/><path d="M0.700 11.800 C0.700 9 2.200 7.800 4.200 7.800 C6.200 7.800 7.700 9 7.700 11.800"/><circle cx="9.900" cy="2.900" r="2"/><path d="M8.300 6.200 C10.900 5.700 12.500 7 12.500 9.600"/></g></svg><div class="abs" style="left:242px;top:147.200px;width:25px;height:15.600px;border-radius:4px;background:#e0f3eb"></div><span class="t green md k8" style="left:246.50px;top:149.20px;font-size:12.8px;letter-spacing:0.850px;-webkit-text-stroke-width:.2px">05</span><div class="abs" style="left:271px;top:147.200px;width:100px;height:15.600px;border-radius:8px;background:linear-gradient(90deg,#e0f3eb 0,#e0f3eb 54%,#f1f2f6 63%,#f1f2f6 100%)"></div></div>
<div class="card" style="left:585px;top:398px"><div class="gb"><i></i><span class="t green md k1" style="left:43.90px;top:13.27px;font-size:13.5px;letter-spacing:-0.050px;-webkit-text-stroke-width:.6px">ĐANG PHỤC VỤ</span><span class="t green md k2" style="left:25.15px;top:59.60px;font-size:23.5px;letter-spacing:-0.192px;-webkit-text-stroke-width:.85px">V.I.P-1</span><span class="t green k3" style="left:104.65px;top:65.40px;font-size:15.5px;letter-spacing:-0.038px;">A-1 | C-6</span></div><div class="btn" style="left:10px;background:#f1f2f6"><svg width="6" height="16.5" viewBox="0 0 6 16.500" style="left:17px;top:11.550px"><g fill="none" stroke="#767676" stroke-width="1.250"><circle cx="3" cy="2.700" r="1.550"/><circle cx="3" cy="8.250" r="1.550"/><circle cx="3" cy="13.800" r="1.550"/></g></svg></div><div class="btn" style="left:60px;background:#e0f3eb"><svg width="16" height="15" viewBox="0 0 16 15" style="left:12px;top:12.400px"><g fill="none" stroke="#49ad87" stroke-width="1.3" stroke-linejoin="round"><path d="M6.8 2.5 V10.899999999999999 A4.3 1.9 0 0 0 15.399999999999999 10.899999999999999 V2.5 A4.3 1.9 0 0 0 6.8 2.5 Z" fill="#e0f3eb"/><ellipse cx="11.1" cy="2.5" rx="4.3" ry="1.9" fill="#e0f3eb"/><path d="M6.8 5.3 A4.3 1.9 0 0 0 15.399999999999999 5.3"/><path d="M6.8 8.1 A4.3 1.9 0 0 0 15.399999999999999 8.1"/><path d="M0.7000000000000002 7.9 V13.3 A4.3 1.9 0 0 0 9.3 13.3 V7.9 A4.3 1.9 0 0 0 0.7000000000000002 7.9 Z" fill="#e0f3eb"/><ellipse cx="5" cy="7.9" rx="4.3" ry="1.9" fill="#e0f3eb"/><path d="M0.7000000000000002 10.600000000000001 A4.3 1.9 0 0 0 9.3 10.600000000000001"/></g></svg></div><div class="btn" style="left:110px;background:#f1f2f6"><svg width="18" height="18" viewBox="0 0 20 20" style="left:11px;top:11px"><g fill="none" stroke="#fff" stroke-width="2.5" stroke-linejoin="round" stroke-linecap="round"><path d="M5.500 6.500 V4 A2.500 2.500 0 0 1 8 1.500 H12 A2.500 2.500 0 0 1 14.500 4 V6.500"/><path d="M5 15.5 H4 A3 3 0 0 1 1 12.5 V9.500 A3 3 0 0 1 4 6.500 H16 A3 3 0 0 1 19 9.500 V12.5 A3 3 0 0 1 16 15.5 H15"/><rect x="5" y="11.5" width="10" height="7" rx="2"/><path d="M14 9.300 H15.500"/></g></svg></div><div class="btn" style="left:160px;background:#e0f3eb"><svg width="16.5" height="17.5" viewBox="0 0 16 17" style="left:12.500px;top:11.600px"><g fill="none" stroke="#49ad87" stroke-width="1.4" stroke-linejoin="round" stroke-linecap="round"><path d="M6 15.300 H3.300 A2.300 2.300 0 0 1 1 13 V3.300 A2.300 2.300 0 0 1 3.300 1 H10 A2.300 2.300 0 0 1 12.300 3.300 V7"/><path d="M4.300 4.300 H8.800"/><path d="M4.300 7.600 H8.300 V10"/></g><circle cx="10.200" cy="11.200" r="5.300" fill="#e0f3eb"/><circle cx="10.200" cy="11.200" r="4.300" fill="#49ad87"/><path d="M8.200 11.200 L9.700 12.700 L12.300 9.800" fill="none" stroke="#e0f3eb" stroke-width="1.400" stroke-linecap="round" stroke-linejoin="round"/></svg></div><span class="t green md k4" style="left:222.35px;top:13.70px;font-size:32.5px;letter-spacing:1.144px;-webkit-text-stroke-width:1.05px">21,300,000</span><svg width="15" height="17.5" viewBox="0 0 15 17.200" style="position:absolute;left:226px;top:60.500px"><g fill="none" stroke="#707070" stroke-width="1.7" stroke-linejoin="round" stroke-linecap="round"><path d="M9.300 16.300 H3.800 A2.800 2.800 0 0 1 1 13.500 V3.800 A2.800 2.800 0 0 1 3.800 1 H11.2 A2.800 2.800 0 0 1 14 3.800 V11.6 Z"/><path d="M9.300 16.300 V13.400 A1.800 1.800 0 0 1 11.100 11.600 H14"/><path d="M4.300 4.600 H10.200 M4.300 7.600 H8.200"/></g></svg><span class="t gray k5" style="left:250.00px;top:63.20px;font-size:16px;letter-spacing:0.417px;">#002130102022</span><svg width="18" height="18" viewBox="0 0 18 18" style="position:absolute;left:225px;top:90px"><g fill="none" stroke="#707070" stroke-width="1.9" stroke-linejoin="round" stroke-linecap="round"><circle cx="9" cy="9" r="8"/><path d="M9 4.800 V9.400 L12 11"/></g></svg><span class="t gray k6" style="left:250.10px;top:93.20px;font-size:16px;letter-spacing:0.375px;">90:44</span><svg width="17" height="17.5" viewBox="0 0 17 17.500" style="position:absolute;left:225px;top:119.600px"><g fill="none" stroke="#6f6f6f" stroke-linejoin="round" stroke-linecap="round"><path d="M1.300 15.400 A8.100 9.600 0 0 1 9.300 6.200 A8.100 9.600 0 0 1 14.500 8.200" stroke-width="1.900"/><path d="M9.100 6 V3" stroke-width="1.800"/><path d="M0.900 16.300 H7.200" stroke-width="1.900"/></g><circle cx="9.100" cy="2.100" r="1.700" fill="#6f6f6f"/><circle cx="11.300" cy="11.300" r="5.700" fill="#fff"/><circle cx="11.300" cy="11.300" r="4.900" fill="#6f6f6f"/><path d="M8.900 11.400 L10.600 13.100 L13.700 9.600" fill="none" stroke="#fff" stroke-width="1.600" stroke-linecap="round" stroke-linejoin="round"/></svg><span class="t green k7" style="left:250.00px;top:121.90px;font-size:15.5px;letter-spacing:0.608px;-webkit-text-stroke:.3px currentColor;">500,000</span><svg width="13.5" height="12.5" viewBox="0 0 13.200 12.200" style="position:absolute;left:223.500px;top:149px"><g fill="none" stroke="#707070" stroke-width="1.3" stroke-linejoin="round" stroke-linecap="round"><circle cx="4.200" cy="4.500" r="2.300"/><path d="M0.700 11.800 C0.700 9 2.200 7.800 4.200 7.800 C6.200 7.800 7.700 9 7.700 11.800"/><circle cx="9.900" cy="2.900" r="2"/><path d="M8.300 6.200 C10.900 5.700 12.500 7 12.500 9.600"/></g></svg><div class="abs" style="left:242px;top:147.200px;width:25px;height:15.600px;border-radius:4px;background:#e0f3eb"></div><span class="t green md k8" style="left:246.50px;top:149.20px;font-size:12.8px;letter-spacing:0.850px;-webkit-text-stroke-width:.2px">05</span><div class="abs" style="left:271px;top:147.200px;width:100px;height:15.600px;border-radius:8px;background:linear-gradient(90deg,#e0f3eb 0,#e0f3eb 54%,#f1f2f6 63%,#f1f2f6 100%)"></div></div>
<div class="card" style="left:1001px;top:398px"><div class="gb"><i></i><span class="t green md k1" style="left:43.90px;top:13.27px;font-size:13.5px;letter-spacing:-0.050px;-webkit-text-stroke-width:.6px">ĐANG PHỤC VỤ</span><span class="t green md k2" style="left:25.15px;top:59.60px;font-size:23.5px;letter-spacing:-0.192px;-webkit-text-stroke-width:.85px">V.I.P-1</span><span class="t green k3" style="left:104.65px;top:65.40px;font-size:15.5px;letter-spacing:-0.038px;">A-1 | C-6</span></div><div class="btn" style="left:10px;background:#f1f2f6"><svg width="6" height="16.5" viewBox="0 0 6 16.500" style="left:17px;top:11.550px"><g fill="none" stroke="#767676" stroke-width="1.250"><circle cx="3" cy="2.700" r="1.550"/><circle cx="3" cy="8.250" r="1.550"/><circle cx="3" cy="13.800" r="1.550"/></g></svg></div><div class="btn" style="left:60px;background:#e0f3eb"><svg width="16" height="15" viewBox="0 0 16 15" style="left:12px;top:12.400px"><g fill="none" stroke="#49ad87" stroke-width="1.3" stroke-linejoin="round"><path d="M6.8 2.5 V10.899999999999999 A4.3 1.9 0 0 0 15.399999999999999 10.899999999999999 V2.5 A4.3 1.9 0 0 0 6.8 2.5 Z" fill="#e0f3eb"/><ellipse cx="11.1" cy="2.5" rx="4.3" ry="1.9" fill="#e0f3eb"/><path d="M6.8 5.3 A4.3 1.9 0 0 0 15.399999999999999 5.3"/><path d="M6.8 8.1 A4.3 1.9 0 0 0 15.399999999999999 8.1"/><path d="M0.7000000000000002 7.9 V13.3 A4.3 1.9 0 0 0 9.3 13.3 V7.9 A4.3 1.9 0 0 0 0.7000000000000002 7.9 Z" fill="#e0f3eb"/><ellipse cx="5" cy="7.9" rx="4.3" ry="1.9" fill="#e0f3eb"/><path d="M0.7000000000000002 10.600000000000001 A4.3 1.9 0 0 0 9.3 10.600000000000001"/></g></svg></div><div class="btn" style="left:110px;background:#f1f2f6"><svg width="18" height="18" viewBox="0 0 20 20" style="left:11px;top:11px"><g fill="none" stroke="#fff" stroke-width="2.5" stroke-linejoin="round" stroke-linecap="round"><path d="M5.500 6.500 V4 A2.500 2.500 0 0 1 8 1.500 H12 A2.500 2.500 0 0 1 14.500 4 V6.500"/><path d="M5 15.5 H4 A3 3 0 0 1 1 12.5 V9.500 A3 3 0 0 1 4 6.500 H16 A3 3 0 0 1 19 9.500 V12.5 A3 3 0 0 1 16 15.5 H15"/><rect x="5" y="11.5" width="10" height="7" rx="2"/><path d="M14 9.300 H15.500"/></g></svg></div><div class="btn" style="left:160px;background:#e0f3eb"><svg width="16.5" height="17.5" viewBox="0 0 16 17" style="left:12.500px;top:11.600px"><g fill="none" stroke="#49ad87" stroke-width="1.4" stroke-linejoin="round" stroke-linecap="round"><path d="M6 15.300 H3.300 A2.300 2.300 0 0 1 1 13 V3.300 A2.300 2.300 0 0 1 3.300 1 H10 A2.300 2.300 0 0 1 12.300 3.300 V7"/><path d="M4.300 4.300 H8.800"/><path d="M4.300 7.600 H8.300 V10"/></g><circle cx="10.200" cy="11.200" r="5.300" fill="#e0f3eb"/><circle cx="10.200" cy="11.200" r="4.300" fill="#49ad87"/><path d="M8.200 11.200 L9.700 12.700 L12.300 9.800" fill="none" stroke="#e0f3eb" stroke-width="1.400" stroke-linecap="round" stroke-linejoin="round"/></svg></div><span class="t green md k4" style="left:222.35px;top:13.70px;font-size:32.5px;letter-spacing:1.144px;-webkit-text-stroke-width:1.05px">21,300,000</span><svg width="15" height="17.5" viewBox="0 0 15 17.200" style="position:absolute;left:226px;top:60.500px"><g fill="none" stroke="#707070" stroke-width="1.7" stroke-linejoin="round" stroke-linecap="round"><path d="M9.300 16.300 H3.800 A2.800 2.800 0 0 1 1 13.500 V3.800 A2.800 2.800 0 0 1 3.800 1 H11.2 A2.800 2.800 0 0 1 14 3.800 V11.6 Z"/><path d="M9.300 16.300 V13.400 A1.800 1.800 0 0 1 11.100 11.600 H14"/><path d="M4.300 4.600 H10.200 M4.300 7.600 H8.200"/></g></svg><span class="t gray k5" style="left:250.00px;top:63.20px;font-size:16px;letter-spacing:0.417px;">#002130102022</span><svg width="18" height="18" viewBox="0 0 18 18" style="position:absolute;left:225px;top:90px"><g fill="none" stroke="#707070" stroke-width="1.9" stroke-linejoin="round" stroke-linecap="round"><circle cx="9" cy="9" r="8"/><path d="M9 4.800 V9.400 L12 11"/></g></svg><span class="t gray k6" style="left:250.10px;top:93.20px;font-size:16px;letter-spacing:0.375px;">90:44</span><svg width="17" height="17.5" viewBox="0 0 17 17.500" style="position:absolute;left:225px;top:119.600px"><g fill="none" stroke="#6f6f6f" stroke-linejoin="round" stroke-linecap="round"><path d="M1.300 15.400 A8.100 9.600 0 0 1 9.300 6.200 A8.100 9.600 0 0 1 14.500 8.200" stroke-width="1.900"/><path d="M9.100 6 V3" stroke-width="1.800"/><path d="M0.900 16.300 H7.200" stroke-width="1.900"/></g><circle cx="9.100" cy="2.100" r="1.700" fill="#6f6f6f"/><circle cx="11.300" cy="11.300" r="5.700" fill="#fff"/><circle cx="11.300" cy="11.300" r="4.900" fill="#6f6f6f"/><path d="M8.900 11.400 L10.600 13.100 L13.700 9.600" fill="none" stroke="#fff" stroke-width="1.600" stroke-linecap="round" stroke-linejoin="round"/></svg><span class="t green k7" style="left:250.00px;top:121.90px;font-size:15.5px;letter-spacing:0.608px;-webkit-text-stroke:.3px currentColor;">500,000</span><svg width="13.5" height="12.5" viewBox="0 0 13.200 12.200" style="position:absolute;left:223.500px;top:149px"><g fill="none" stroke="#707070" stroke-width="1.3" stroke-linejoin="round" stroke-linecap="round"><circle cx="4.200" cy="4.500" r="2.300"/><path d="M0.700 11.800 C0.700 9 2.200 7.800 4.200 7.800 C6.200 7.800 7.700 9 7.700 11.800"/><circle cx="9.900" cy="2.900" r="2"/><path d="M8.300 6.200 C10.900 5.700 12.500 7 12.500 9.600"/></g></svg><div class="abs" style="left:242px;top:147.200px;width:25px;height:15.600px;border-radius:4px;background:#e0f3eb"></div><span class="t green md k8" style="left:246.50px;top:149.20px;font-size:12.8px;letter-spacing:0.850px;-webkit-text-stroke-width:.2px">05</span><div class="abs" style="left:271px;top:147.200px;width:100px;height:15.600px;border-radius:8px;background:linear-gradient(90deg,#e0f3eb 0,#e0f3eb 54%,#f1f2f6 63%,#f1f2f6 100%)"></div></div>
<div class="card" style="left:585px;top:581px"><div class="gb"><i></i><span class="t green md k1" style="left:43.90px;top:13.27px;font-size:13.5px;letter-spacing:-0.050px;-webkit-text-stroke-width:.6px">ĐANG PHỤC VỤ</span><span class="t green md k2" style="left:25.15px;top:59.60px;font-size:23.5px;letter-spacing:-0.192px;-webkit-text-stroke-width:.85px">V.I.P-1</span><span class="t green k3" style="left:104.65px;top:65.40px;font-size:15.5px;letter-spacing:-0.038px;">A-1 | C-6</span></div><div class="btn" style="left:10px;background:#f1f2f6"><svg width="6" height="16.5" viewBox="0 0 6 16.500" style="left:17px;top:11.550px"><g fill="none" stroke="#767676" stroke-width="1.250"><circle cx="3" cy="2.700" r="1.550"/><circle cx="3" cy="8.250" r="1.550"/><circle cx="3" cy="13.800" r="1.550"/></g></svg></div><div class="btn" style="left:60px;background:#e0f3eb"><svg width="16" height="15" viewBox="0 0 16 15" style="left:12px;top:12.400px"><g fill="none" stroke="#49ad87" stroke-width="1.3" stroke-linejoin="round"><path d="M6.8 2.5 V10.899999999999999 A4.3 1.9 0 0 0 15.399999999999999 10.899999999999999 V2.5 A4.3 1.9 0 0 0 6.8 2.5 Z" fill="#e0f3eb"/><ellipse cx="11.1" cy="2.5" rx="4.3" ry="1.9" fill="#e0f3eb"/><path d="M6.8 5.3 A4.3 1.9 0 0 0 15.399999999999999 5.3"/><path d="M6.8 8.1 A4.3 1.9 0 0 0 15.399999999999999 8.1"/><path d="M0.7000000000000002 7.9 V13.3 A4.3 1.9 0 0 0 9.3 13.3 V7.9 A4.3 1.9 0 0 0 0.7000000000000002 7.9 Z" fill="#e0f3eb"/><ellipse cx="5" cy="7.9" rx="4.3" ry="1.9" fill="#e0f3eb"/><path d="M0.7000000000000002 10.600000000000001 A4.3 1.9 0 0 0 9.3 10.600000000000001"/></g></svg></div><div class="btn" style="left:110px;background:#f1f2f6"><svg width="18" height="18" viewBox="0 0 20 20" style="left:11px;top:11px"><g fill="none" stroke="#fff" stroke-width="2.5" stroke-linejoin="round" stroke-linecap="round"><path d="M5.500 6.500 V4 A2.500 2.500 0 0 1 8 1.500 H12 A2.500 2.500 0 0 1 14.500 4 V6.500"/><path d="M5 15.5 H4 A3 3 0 0 1 1 12.5 V9.500 A3 3 0 0 1 4 6.500 H16 A3 3 0 0 1 19 9.500 V12.5 A3 3 0 0 1 16 15.5 H15"/><rect x="5" y="11.5" width="10" height="7" rx="2"/><path d="M14 9.300 H15.500"/></g></svg></div><div class="btn" style="left:160px;background:#e0f3eb"><svg width="16.5" height="17.5" viewBox="0 0 16 17" style="left:12.500px;top:11.600px"><g fill="none" stroke="#49ad87" stroke-width="1.4" stroke-linejoin="round" stroke-linecap="round"><path d="M6 15.300 H3.300 A2.300 2.300 0 0 1 1 13 V3.300 A2.300 2.300 0 0 1 3.300 1 H10 A2.300 2.300 0 0 1 12.300 3.300 V7"/><path d="M4.300 4.300 H8.800"/><path d="M4.300 7.600 H8.300 V10"/></g><circle cx="10.200" cy="11.200" r="5.300" fill="#e0f3eb"/><circle cx="10.200" cy="11.200" r="4.300" fill="#49ad87"/><path d="M8.200 11.200 L9.700 12.700 L12.300 9.800" fill="none" stroke="#e0f3eb" stroke-width="1.400" stroke-linecap="round" stroke-linejoin="round"/></svg></div><span class="t green md k4" style="left:222.35px;top:13.70px;font-size:32.5px;letter-spacing:1.144px;-webkit-text-stroke-width:1.05px">21,300,000</span><svg width="15" height="17.5" viewBox="0 0 15 17.200" style="position:absolute;left:226px;top:60.500px"><g fill="none" stroke="#707070" stroke-width="1.7" stroke-linejoin="round" stroke-linecap="round"><path d="M9.300 16.300 H3.800 A2.800 2.800 0 0 1 1 13.500 V3.800 A2.800 2.800 0 0 1 3.800 1 H11.2 A2.800 2.800 0 0 1 14 3.800 V11.6 Z"/><path d="M9.300 16.300 V13.400 A1.800 1.800 0 0 1 11.100 11.600 H14"/><path d="M4.300 4.600 H10.200 M4.300 7.600 H8.200"/></g></svg><span class="t gray k5" style="left:250.00px;top:63.20px;font-size:16px;letter-spacing:0.417px;">#002130102022</span><svg width="18" height="18" viewBox="0 0 18 18" style="position:absolute;left:225px;top:90px"><g fill="none" stroke="#707070" stroke-width="1.9" stroke-linejoin="round" stroke-linecap="round"><circle cx="9" cy="9" r="8"/><path d="M9 4.800 V9.400 L12 11"/></g></svg><span class="t gray k6" style="left:250.10px;top:93.20px;font-size:16px;letter-spacing:0.375px;">90:44</span><svg width="17" height="17.5" viewBox="0 0 17 17.500" style="position:absolute;left:225px;top:119.600px"><g fill="none" stroke="#6f6f6f" stroke-linejoin="round" stroke-linecap="round"><path d="M1.300 15.400 A8.100 9.600 0 0 1 9.300 6.200 A8.100 9.600 0 0 1 14.500 8.200" stroke-width="1.900"/><path d="M9.100 6 V3" stroke-width="1.800"/><path d="M0.900 16.300 H7.200" stroke-width="1.900"/></g><circle cx="9.100" cy="2.100" r="1.700" fill="#6f6f6f"/><circle cx="11.300" cy="11.300" r="5.700" fill="#fff"/><circle cx="11.300" cy="11.300" r="4.900" fill="#6f6f6f"/><path d="M8.900 11.400 L10.600 13.100 L13.700 9.600" fill="none" stroke="#fff" stroke-width="1.600" stroke-linecap="round" stroke-linejoin="round"/></svg><span class="t green k7" style="left:250.00px;top:121.90px;font-size:15.5px;letter-spacing:0.608px;-webkit-text-stroke:.3px currentColor;">500,000</span><svg width="13.5" height="12.5" viewBox="0 0 13.200 12.200" style="position:absolute;left:223.500px;top:149px"><g fill="none" stroke="#707070" stroke-width="1.3" stroke-linejoin="round" stroke-linecap="round"><circle cx="4.200" cy="4.500" r="2.300"/><path d="M0.700 11.800 C0.700 9 2.200 7.800 4.200 7.800 C6.200 7.800 7.700 9 7.700 11.800"/><circle cx="9.900" cy="2.900" r="2"/><path d="M8.300 6.200 C10.900 5.700 12.500 7 12.500 9.600"/></g></svg><div class="abs" style="left:242px;top:147.200px;width:25px;height:15.600px;border-radius:4px;background:#e0f3eb"></div><span class="t green md k8" style="left:246.50px;top:149.20px;font-size:12.8px;letter-spacing:0.850px;-webkit-text-stroke-width:.2px">05</span><div class="abs" style="left:271px;top:147.200px;width:100px;height:15.600px;border-radius:8px;background:linear-gradient(90deg,#e0f3eb 0,#e0f3eb 54%,#f1f2f6 63%,#f1f2f6 100%)"></div></div>
<div class="card" style="left:1001px;top:581px"><div class="gb"><i></i><span class="t green md k1" style="left:43.90px;top:13.27px;font-size:13.5px;letter-spacing:-0.050px;-webkit-text-stroke-width:.6px">ĐANG PHỤC VỤ</span><span class="t green md k2" style="left:25.15px;top:59.60px;font-size:23.5px;letter-spacing:-0.192px;-webkit-text-stroke-width:.85px">V.I.P-1</span><span class="t green k3" style="left:104.65px;top:65.40px;font-size:15.5px;letter-spacing:-0.038px;">A-1 | C-6</span></div><div class="btn" style="left:10px;background:#f1f2f6"><svg width="6" height="16.5" viewBox="0 0 6 16.500" style="left:17px;top:11.550px"><g fill="none" stroke="#767676" stroke-width="1.250"><circle cx="3" cy="2.700" r="1.550"/><circle cx="3" cy="8.250" r="1.550"/><circle cx="3" cy="13.800" r="1.550"/></g></svg></div><div class="btn" style="left:60px;background:#e0f3eb"><svg width="16" height="15" viewBox="0 0 16 15" style="left:12px;top:12.400px"><g fill="none" stroke="#49ad87" stroke-width="1.3" stroke-linejoin="round"><path d="M6.8 2.5 V10.899999999999999 A4.3 1.9 0 0 0 15.399999999999999 10.899999999999999 V2.5 A4.3 1.9 0 0 0 6.8 2.5 Z" fill="#e0f3eb"/><ellipse cx="11.1" cy="2.5" rx="4.3" ry="1.9" fill="#e0f3eb"/><path d="M6.8 5.3 A4.3 1.9 0 0 0 15.399999999999999 5.3"/><path d="M6.8 8.1 A4.3 1.9 0 0 0 15.399999999999999 8.1"/><path d="M0.7000000000000002 7.9 V13.3 A4.3 1.9 0 0 0 9.3 13.3 V7.9 A4.3 1.9 0 0 0 0.7000000000000002 7.9 Z" fill="#e0f3eb"/><ellipse cx="5" cy="7.9" rx="4.3" ry="1.9" fill="#e0f3eb"/><path d="M0.7000000000000002 10.600000000000001 A4.3 1.9 0 0 0 9.3 10.600000000000001"/></g></svg></div><div class="btn" style="left:110px;background:#f1f2f6"><svg width="18" height="18" viewBox="0 0 20 20" style="left:11px;top:11px"><g fill="none" stroke="#fff" stroke-width="2.5" stroke-linejoin="round" stroke-linecap="round"><path d="M5.500 6.500 V4 A2.500 2.500 0 0 1 8 1.500 H12 A2.500 2.500 0 0 1 14.500 4 V6.500"/><path d="M5 15.5 H4 A3 3 0 0 1 1 12.5 V9.500 A3 3 0 0 1 4 6.500 H16 A3 3 0 0 1 19 9.500 V12.5 A3 3 0 0 1 16 15.5 H15"/><rect x="5" y="11.5" width="10" height="7" rx="2"/><path d="M14 9.300 H15.500"/></g></svg></div><div class="btn" style="left:160px;background:#e0f3eb"><svg width="16.5" height="17.5" viewBox="0 0 16 17" style="left:12.500px;top:11.600px"><g fill="none" stroke="#49ad87" stroke-width="1.4" stroke-linejoin="round" stroke-linecap="round"><path d="M6 15.300 H3.300 A2.300 2.300 0 0 1 1 13 V3.300 A2.300 2.300 0 0 1 3.300 1 H10 A2.300 2.300 0 0 1 12.300 3.300 V7"/><path d="M4.300 4.300 H8.800"/><path d="M4.300 7.600 H8.300 V10"/></g><circle cx="10.200" cy="11.200" r="5.300" fill="#e0f3eb"/><circle cx="10.200" cy="11.200" r="4.300" fill="#49ad87"/><path d="M8.200 11.200 L9.700 12.700 L12.300 9.800" fill="none" stroke="#e0f3eb" stroke-width="1.400" stroke-linecap="round" stroke-linejoin="round"/></svg></div><span class="t green md k4" style="left:222.35px;top:13.70px;font-size:32.5px;letter-spacing:1.144px;-webkit-text-stroke-width:1.05px">21,300,000</span><svg width="15" height="17.5" viewBox="0 0 15 17.200" style="position:absolute;left:226px;top:60.500px"><g fill="none" stroke="#707070" stroke-width="1.7" stroke-linejoin="round" stroke-linecap="round"><path d="M9.300 16.300 H3.800 A2.800 2.800 0 0 1 1 13.500 V3.800 A2.800 2.800 0 0 1 3.800 1 H11.2 A2.800 2.800 0 0 1 14 3.800 V11.6 Z"/><path d="M9.300 16.300 V13.400 A1.800 1.800 0 0 1 11.100 11.600 H14"/><path d="M4.300 4.600 H10.200 M4.300 7.600 H8.200"/></g></svg><span class="t gray k5" style="left:250.00px;top:63.20px;font-size:16px;letter-spacing:0.417px;">#002130102022</span><svg width="18" height="18" viewBox="0 0 18 18" style="position:absolute;left:225px;top:90px"><g fill="none" stroke="#707070" stroke-width="1.9" stroke-linejoin="round" stroke-linecap="round"><circle cx="9" cy="9" r="8"/><path d="M9 4.800 V9.400 L12 11"/></g></svg><span class="t gray k6" style="left:250.10px;top:93.20px;font-size:16px;letter-spacing:0.375px;">90:44</span><svg width="17" height="17.5" viewBox="0 0 17 17.500" style="position:absolute;left:225px;top:119.600px"><g fill="none" stroke="#6f6f6f" stroke-linejoin="round" stroke-linecap="round"><path d="M1.300 15.400 A8.100 9.600 0 0 1 9.300 6.200 A8.100 9.600 0 0 1 14.500 8.200" stroke-width="1.900"/><path d="M9.100 6 V3" stroke-width="1.800"/><path d="M0.900 16.300 H7.200" stroke-width="1.900"/></g><circle cx="9.100" cy="2.100" r="1.700" fill="#6f6f6f"/><circle cx="11.300" cy="11.300" r="5.700" fill="#fff"/><circle cx="11.300" cy="11.300" r="4.900" fill="#6f6f6f"/><path d="M8.900 11.400 L10.600 13.100 L13.700 9.600" fill="none" stroke="#fff" stroke-width="1.600" stroke-linecap="round" stroke-linejoin="round"/></svg><span class="t green k7" style="left:250.00px;top:121.90px;font-size:15.5px;letter-spacing:0.608px;-webkit-text-stroke:.3px currentColor;">500,000</span><svg width="13.5" height="12.5" viewBox="0 0 13.200 12.200" style="position:absolute;left:223.500px;top:149px"><g fill="none" stroke="#707070" stroke-width="1.3" stroke-linejoin="round" stroke-linecap="round"><circle cx="4.200" cy="4.500" r="2.300"/><path d="M0.700 11.800 C0.700 9 2.200 7.800 4.200 7.800 C6.200 7.800 7.700 9 7.700 11.800"/><circle cx="9.900" cy="2.900" r="2"/><path d="M8.300 6.200 C10.900 5.700 12.500 7 12.500 9.600"/></g></svg><div class="abs" style="left:242px;top:147.200px;width:25px;height:15.600px;border-radius:4px;background:#e0f3eb"></div><span class="t green md k8" style="left:246.50px;top:149.20px;font-size:12.8px;letter-spacing:0.850px;-webkit-text-stroke-width:.2px">05</span><div class="abs" style="left:271px;top:147.200px;width:100px;height:15.600px;border-radius:8px;background:linear-gradient(90deg,#e0f3eb 0,#e0f3eb 54%,#f1f2f6 63%,#f1f2f6 100%)"></div></div>
<div class="card" style="left:585px;top:764px"><div class="gb"><i></i><span class="t green md k1" style="left:43.90px;top:13.27px;font-size:13.5px;letter-spacing:-0.050px;-webkit-text-stroke-width:.6px">ĐANG PHỤC VỤ</span><span class="t green md k2" style="left:25.15px;top:59.60px;font-size:23.5px;letter-spacing:-0.192px;-webkit-text-stroke-width:.85px">V.I.P-1</span><span class="t green k3" style="left:104.65px;top:65.40px;font-size:15.5px;letter-spacing:-0.038px;">A-1 | C-6</span></div><div class="btn" style="left:10px;background:#f1f2f6"><svg width="6" height="16.5" viewBox="0 0 6 16.500" style="left:17px;top:11.550px"><g fill="none" stroke="#767676" stroke-width="1.250"><circle cx="3" cy="2.700" r="1.550"/><circle cx="3" cy="8.250" r="1.550"/><circle cx="3" cy="13.800" r="1.550"/></g></svg></div><div class="btn" style="left:60px;background:#e0f3eb"><svg width="16" height="15" viewBox="0 0 16 15" style="left:12px;top:12.400px"><g fill="none" stroke="#49ad87" stroke-width="1.3" stroke-linejoin="round"><path d="M6.8 2.5 V10.899999999999999 A4.3 1.9 0 0 0 15.399999999999999 10.899999999999999 V2.5 A4.3 1.9 0 0 0 6.8 2.5 Z" fill="#e0f3eb"/><ellipse cx="11.1" cy="2.5" rx="4.3" ry="1.9" fill="#e0f3eb"/><path d="M6.8 5.3 A4.3 1.9 0 0 0 15.399999999999999 5.3"/><path d="M6.8 8.1 A4.3 1.9 0 0 0 15.399999999999999 8.1"/><path d="M0.7000000000000002 7.9 V13.3 A4.3 1.9 0 0 0 9.3 13.3 V7.9 A4.3 1.9 0 0 0 0.7000000000000002 7.9 Z" fill="#e0f3eb"/><ellipse cx="5" cy="7.9" rx="4.3" ry="1.9" fill="#e0f3eb"/><path d="M0.7000000000000002 10.600000000000001 A4.3 1.9 0 0 0 9.3 10.600000000000001"/></g></svg></div><div class="btn" style="left:110px;background:#f1f2f6"><svg width="18" height="18" viewBox="0 0 20 20" style="left:11px;top:11px"><g fill="none" stroke="#fff" stroke-width="2.5" stroke-linejoin="round" stroke-linecap="round"><path d="M5.500 6.500 V4 A2.500 2.500 0 0 1 8 1.500 H12 A2.500 2.500 0 0 1 14.500 4 V6.500"/><path d="M5 15.5 H4 A3 3 0 0 1 1 12.5 V9.500 A3 3 0 0 1 4 6.500 H16 A3 3 0 0 1 19 9.500 V12.5 A3 3 0 0 1 16 15.5 H15"/><rect x="5" y="11.5" width="10" height="7" rx="2"/><path d="M14 9.300 H15.500"/></g></svg></div><div class="btn" style="left:160px;background:#e0f3eb"><svg width="16.5" height="17.5" viewBox="0 0 16 17" style="left:12.500px;top:11.600px"><g fill="none" stroke="#49ad87" stroke-width="1.4" stroke-linejoin="round" stroke-linecap="round"><path d="M6 15.300 H3.300 A2.300 2.300 0 0 1 1 13 V3.300 A2.300 2.300 0 0 1 3.300 1 H10 A2.300 2.300 0 0 1 12.300 3.300 V7"/><path d="M4.300 4.300 H8.800"/><path d="M4.300 7.600 H8.300 V10"/></g><circle cx="10.200" cy="11.200" r="5.300" fill="#e0f3eb"/><circle cx="10.200" cy="11.200" r="4.300" fill="#49ad87"/><path d="M8.200 11.200 L9.700 12.700 L12.300 9.800" fill="none" stroke="#e0f3eb" stroke-width="1.400" stroke-linecap="round" stroke-linejoin="round"/></svg></div><span class="t green md k4" style="left:222.35px;top:13.70px;font-size:32.5px;letter-spacing:1.144px;-webkit-text-stroke-width:1.05px">21,300,000</span><svg width="15" height="17.5" viewBox="0 0 15 17.200" style="position:absolute;left:226px;top:60.500px"><g fill="none" stroke="#707070" stroke-width="1.7" stroke-linejoin="round" stroke-linecap="round"><path d="M9.300 16.300 H3.800 A2.800 2.800 0 0 1 1 13.500 V3.800 A2.800 2.800 0 0 1 3.800 1 H11.2 A2.800 2.800 0 0 1 14 3.800 V11.6 Z"/><path d="M9.300 16.300 V13.400 A1.800 1.800 0 0 1 11.100 11.600 H14"/><path d="M4.300 4.600 H10.200 M4.300 7.600 H8.200"/></g></svg><span class="t gray k5" style="left:250.00px;top:63.20px;font-size:16px;letter-spacing:0.417px;">#002130102022</span><svg width="18" height="18" viewBox="0 0 18 18" style="position:absolute;left:225px;top:90px"><g fill="none" stroke="#707070" stroke-width="1.9" stroke-linejoin="round" stroke-linecap="round"><circle cx="9" cy="9" r="8"/><path d="M9 4.800 V9.400 L12 11"/></g></svg><span class="t gray k6" style="left:250.10px;top:93.20px;font-size:16px;letter-spacing:0.375px;">90:44</span><svg width="17" height="17.5" viewBox="0 0 17 17.500" style="position:absolute;left:225px;top:119.600px"><g fill="none" stroke="#6f6f6f" stroke-linejoin="round" stroke-linecap="round"><path d="M1.300 15.400 A8.100 9.600 0 0 1 9.300 6.200 A8.100 9.600 0 0 1 14.500 8.200" stroke-width="1.900"/><path d="M9.100 6 V3" stroke-width="1.800"/><path d="M0.900 16.300 H7.200" stroke-width="1.900"/></g><circle cx="9.100" cy="2.100" r="1.700" fill="#6f6f6f"/><circle cx="11.300" cy="11.300" r="5.700" fill="#fff"/><circle cx="11.300" cy="11.300" r="4.900" fill="#6f6f6f"/><path d="M8.900 11.400 L10.600 13.100 L13.700 9.600" fill="none" stroke="#fff" stroke-width="1.600" stroke-linecap="round" stroke-linejoin="round"/></svg><span class="t green k7" style="left:250.00px;top:121.90px;font-size:15.5px;letter-spacing:0.608px;-webkit-text-stroke:.3px currentColor;">500,000</span><svg width="13.5" height="12.5" viewBox="0 0 13.200 12.200" style="position:absolute;left:223.500px;top:149px"><g fill="none" stroke="#707070" stroke-width="1.3" stroke-linejoin="round" stroke-linecap="round"><circle cx="4.200" cy="4.500" r="2.300"/><path d="M0.700 11.800 C0.700 9 2.200 7.800 4.200 7.800 C6.200 7.800 7.700 9 7.700 11.800"/><circle cx="9.900" cy="2.900" r="2"/><path d="M8.300 6.200 C10.900 5.700 12.500 7 12.500 9.600"/></g></svg><div class="abs" style="left:242px;top:147.200px;width:25px;height:15.600px;border-radius:4px;background:#e0f3eb"></div><span class="t green md k8" style="left:246.50px;top:149.20px;font-size:12.8px;letter-spacing:0.850px;-webkit-text-stroke-width:.2px">05</span><div class="abs" style="left:271px;top:147.200px;width:100px;height:15.600px;border-radius:8px;background:linear-gradient(90deg,#e0f3eb 0,#e0f3eb 54%,#f1f2f6 63%,#f1f2f6 100%)"></div></div>
<div class="card" style="left:1001px;top:764px"><div class="gb"><i></i><span class="t green md k1" style="left:43.90px;top:13.27px;font-size:13.5px;letter-spacing:-0.050px;-webkit-text-stroke-width:.6px">ĐANG PHỤC VỤ</span><span class="t green md k2" style="left:25.15px;top:59.60px;font-size:23.5px;letter-spacing:-0.192px;-webkit-text-stroke-width:.85px">V.I.P-1</span><span class="t green k3" style="left:104.65px;top:65.40px;font-size:15.5px;letter-spacing:-0.038px;">A-1 | C-6</span></div><div class="btn" style="left:10px;background:#f1f2f6"><svg width="6" height="16.5" viewBox="0 0 6 16.500" style="left:17px;top:11.550px"><g fill="none" stroke="#767676" stroke-width="1.250"><circle cx="3" cy="2.700" r="1.550"/><circle cx="3" cy="8.250" r="1.550"/><circle cx="3" cy="13.800" r="1.550"/></g></svg></div><div class="btn" style="left:60px;background:#e0f3eb"><svg width="16" height="15" viewBox="0 0 16 15" style="left:12px;top:12.400px"><g fill="none" stroke="#49ad87" stroke-width="1.3" stroke-linejoin="round"><path d="M6.8 2.5 V10.899999999999999 A4.3 1.9 0 0 0 15.399999999999999 10.899999999999999 V2.5 A4.3 1.9 0 0 0 6.8 2.5 Z" fill="#e0f3eb"/><ellipse cx="11.1" cy="2.5" rx="4.3" ry="1.9" fill="#e0f3eb"/><path d="M6.8 5.3 A4.3 1.9 0 0 0 15.399999999999999 5.3"/><path d="M6.8 8.1 A4.3 1.9 0 0 0 15.399999999999999 8.1"/><path d="M0.7000000000000002 7.9 V13.3 A4.3 1.9 0 0 0 9.3 13.3 V7.9 A4.3 1.9 0 0 0 0.7000000000000002 7.9 Z" fill="#e0f3eb"/><ellipse cx="5" cy="7.9" rx="4.3" ry="1.9" fill="#e0f3eb"/><path d="M0.7000000000000002 10.600000000000001 A4.3 1.9 0 0 0 9.3 10.600000000000001"/></g></svg></div><div class="btn" style="left:110px;background:#f1f2f6"><svg width="18" height="18" viewBox="0 0 20 20" style="left:11px;top:11px"><g fill="none" stroke="#fff" stroke-width="2.5" stroke-linejoin="round" stroke-linecap="round"><path d="M5.500 6.500 V4 A2.500 2.500 0 0 1 8 1.500 H12 A2.500 2.500 0 0 1 14.500 4 V6.500"/><path d="M5 15.5 H4 A3 3 0 0 1 1 12.5 V9.500 A3 3 0 0 1 4 6.500 H16 A3 3 0 0 1 19 9.500 V12.5 A3 3 0 0 1 16 15.5 H15"/><rect x="5" y="11.5" width="10" height="7" rx="2"/><path d="M14 9.300 H15.500"/></g></svg></div><div class="btn" style="left:160px;background:#e0f3eb"><svg width="16.5" height="17.5" viewBox="0 0 16 17" style="left:12.500px;top:11.600px"><g fill="none" stroke="#49ad87" stroke-width="1.4" stroke-linejoin="round" stroke-linecap="round"><path d="M6 15.300 H3.300 A2.300 2.300 0 0 1 1 13 V3.300 A2.300 2.300 0 0 1 3.300 1 H10 A2.300 2.300 0 0 1 12.300 3.300 V7"/><path d="M4.300 4.300 H8.800"/><path d="M4.300 7.600 H8.300 V10"/></g><circle cx="10.200" cy="11.200" r="5.300" fill="#e0f3eb"/><circle cx="10.200" cy="11.200" r="4.300" fill="#49ad87"/><path d="M8.200 11.200 L9.700 12.700 L12.300 9.800" fill="none" stroke="#e0f3eb" stroke-width="1.400" stroke-linecap="round" stroke-linejoin="round"/></svg></div><span class="t green md k4" style="left:222.35px;top:13.70px;font-size:32.5px;letter-spacing:1.144px;-webkit-text-stroke-width:1.05px">21,300,000</span><svg width="15" height="17.5" viewBox="0 0 15 17.200" style="position:absolute;left:226px;top:60.500px"><g fill="none" stroke="#707070" stroke-width="1.7" stroke-linejoin="round" stroke-linecap="round"><path d="M9.300 16.300 H3.800 A2.800 2.800 0 0 1 1 13.500 V3.800 A2.800 2.800 0 0 1 3.800 1 H11.2 A2.800 2.800 0 0 1 14 3.800 V11.6 Z"/><path d="M9.300 16.300 V13.400 A1.800 1.800 0 0 1 11.100 11.600 H14"/><path d="M4.300 4.600 H10.200 M4.300 7.600 H8.200"/></g></svg><span class="t gray k5" style="left:250.00px;top:63.20px;font-size:16px;letter-spacing:0.417px;">#002130102022</span><svg width="18" height="18" viewBox="0 0 18 18" style="position:absolute;left:225px;top:90px"><g fill="none" stroke="#707070" stroke-width="1.9" stroke-linejoin="round" stroke-linecap="round"><circle cx="9" cy="9" r="8"/><path d="M9 4.800 V9.400 L12 11"/></g></svg><span class="t gray k6" style="left:250.10px;top:93.20px;font-size:16px;letter-spacing:0.375px;">90:44</span><svg width="17" height="17.5" viewBox="0 0 17 17.500" style="position:absolute;left:225px;top:119.600px"><g fill="none" stroke="#6f6f6f" stroke-linejoin="round" stroke-linecap="round"><path d="M1.300 15.400 A8.100 9.600 0 0 1 9.300 6.200 A8.100 9.600 0 0 1 14.500 8.200" stroke-width="1.900"/><path d="M9.100 6 V3" stroke-width="1.800"/><path d="M0.900 16.300 H7.200" stroke-width="1.900"/></g><circle cx="9.100" cy="2.100" r="1.700" fill="#6f6f6f"/><circle cx="11.300" cy="11.300" r="5.700" fill="#fff"/><circle cx="11.300" cy="11.300" r="4.900" fill="#6f6f6f"/><path d="M8.900 11.400 L10.600 13.100 L13.700 9.600" fill="none" stroke="#fff" stroke-width="1.600" stroke-linecap="round" stroke-linejoin="round"/></svg><span class="t green k7" style="left:250.00px;top:121.90px;font-size:15.5px;letter-spacing:0.608px;-webkit-text-stroke:.3px currentColor;">500,000</span><svg width="13.5" height="12.5" viewBox="0 0 13.200 12.200" style="position:absolute;left:223.500px;top:149px"><g fill="none" stroke="#707070" stroke-width="1.3" stroke-linejoin="round" stroke-linecap="round"><circle cx="4.200" cy="4.500" r="2.300"/><path d="M0.700 11.800 C0.700 9 2.200 7.800 4.200 7.800 C6.200 7.800 7.700 9 7.700 11.800"/><circle cx="9.900" cy="2.900" r="2"/><path d="M8.300 6.200 C10.900 5.700 12.500 7 12.500 9.600"/></g></svg><div class="abs" style="left:242px;top:147.200px;width:25px;height:15.600px;border-radius:4px;background:#e0f3eb"></div><span class="t green md k8" style="left:246.50px;top:149.20px;font-size:12.8px;letter-spacing:0.850px;-webkit-text-stroke-width:.2px">05</span><div class="abs" style="left:271px;top:147.200px;width:100px;height:15.600px;border-radius:8px;background:linear-gradient(90deg,#e0f3eb 0,#e0f3eb 54%,#f1f2f6 63%,#f1f2f6 100%)"></div></div>
<div class="card" style="left:585px;top:947px"><div class="gb"><i></i><span class="t green md k1" style="left:43.90px;top:13.27px;font-size:13.5px;letter-spacing:-0.050px;-webkit-text-stroke-width:.6px">ĐANG PHỤC VỤ</span><span class="t green md k2" style="left:25.15px;top:59.60px;font-size:23.5px;letter-spacing:-0.192px;-webkit-text-stroke-width:.85px">V.I.P-1</span><span class="t green k3" style="left:104.65px;top:65.40px;font-size:15.5px;letter-spacing:-0.038px;">A-1 | C-6</span></div><div class="btn" style="left:10px;background:#f1f2f6"><svg width="6" height="16.5" viewBox="0 0 6 16.500" style="left:17px;top:11.550px"><g fill="none" stroke="#767676" stroke-width="1.250"><circle cx="3" cy="2.700" r="1.550"/><circle cx="3" cy="8.250" r="1.550"/><circle cx="3" cy="13.800" r="1.550"/></g></svg></div><div class="btn" style="left:60px;background:#e0f3eb"><svg width="16" height="15" viewBox="0 0 16 15" style="left:12px;top:12.400px"><g fill="none" stroke="#49ad87" stroke-width="1.3" stroke-linejoin="round"><path d="M6.8 2.5 V10.899999999999999 A4.3 1.9 0 0 0 15.399999999999999 10.899999999999999 V2.5 A4.3 1.9 0 0 0 6.8 2.5 Z" fill="#e0f3eb"/><ellipse cx="11.1" cy="2.5" rx="4.3" ry="1.9" fill="#e0f3eb"/><path d="M6.8 5.3 A4.3 1.9 0 0 0 15.399999999999999 5.3"/><path d="M6.8 8.1 A4.3 1.9 0 0 0 15.399999999999999 8.1"/><path d="M0.7000000000000002 7.9 V13.3 A4.3 1.9 0 0 0 9.3 13.3 V7.9 A4.3 1.9 0 0 0 0.7000000000000002 7.9 Z" fill="#e0f3eb"/><ellipse cx="5" cy="7.9" rx="4.3" ry="1.9" fill="#e0f3eb"/><path d="M0.7000000000000002 10.600000000000001 A4.3 1.9 0 0 0 9.3 10.600000000000001"/></g></svg></div><div class="btn" style="left:110px;background:#f1f2f6"><svg width="18" height="18" viewBox="0 0 20 20" style="left:11px;top:11px"><g fill="none" stroke="#fff" stroke-width="2.5" stroke-linejoin="round" stroke-linecap="round"><path d="M5.500 6.500 V4 A2.500 2.500 0 0 1 8 1.500 H12 A2.500 2.500 0 0 1 14.500 4 V6.500"/><path d="M5 15.5 H4 A3 3 0 0 1 1 12.5 V9.500 A3 3 0 0 1 4 6.500 H16 A3 3 0 0 1 19 9.500 V12.5 A3 3 0 0 1 16 15.5 H15"/><rect x="5" y="11.5" width="10" height="7" rx="2"/><path d="M14 9.300 H15.500"/></g></svg></div><div class="btn" style="left:160px;background:#e0f3eb"><svg width="16.5" height="17.5" viewBox="0 0 16 17" style="left:12.500px;top:11.600px"><g fill="none" stroke="#49ad87" stroke-width="1.4" stroke-linejoin="round" stroke-linecap="round"><path d="M6 15.300 H3.300 A2.300 2.300 0 0 1 1 13 V3.300 A2.300 2.300 0 0 1 3.300 1 H10 A2.300 2.300 0 0 1 12.300 3.300 V7"/><path d="M4.300 4.300 H8.800"/><path d="M4.300 7.600 H8.300 V10"/></g><circle cx="10.200" cy="11.200" r="5.300" fill="#e0f3eb"/><circle cx="10.200" cy="11.200" r="4.300" fill="#49ad87"/><path d="M8.200 11.200 L9.700 12.700 L12.300 9.800" fill="none" stroke="#e0f3eb" stroke-width="1.400" stroke-linecap="round" stroke-linejoin="round"/></svg></div><span class="t green md k4" style="left:222.35px;top:13.70px;font-size:32.5px;letter-spacing:1.144px;-webkit-text-stroke-width:1.05px">21,300,000</span><svg width="15" height="17.5" viewBox="0 0 15 17.200" style="position:absolute;left:226px;top:60.500px"><g fill="none" stroke="#707070" stroke-width="1.7" stroke-linejoin="round" stroke-linecap="round"><path d="M9.300 16.300 H3.800 A2.800 2.800 0 0 1 1 13.500 V3.800 A2.800 2.800 0 0 1 3.800 1 H11.2 A2.800 2.800 0 0 1 14 3.800 V11.6 Z"/><path d="M9.300 16.300 V13.400 A1.800 1.800 0 0 1 11.100 11.600 H14"/><path d="M4.300 4.600 H10.200 M4.300 7.600 H8.200"/></g></svg><span class="t gray k5" style="left:250.00px;top:63.20px;font-size:16px;letter-spacing:0.417px;">#002130102022</span><svg width="18" height="18" viewBox="0 0 18 18" style="position:absolute;left:225px;top:90px"><g fill="none" stroke="#707070" stroke-width="1.9" stroke-linejoin="round" stroke-linecap="round"><circle cx="9" cy="9" r="8"/><path d="M9 4.800 V9.400 L12 11"/></g></svg><span class="t gray k6" style="left:250.10px;top:93.20px;font-size:16px;letter-spacing:0.375px;">90:44</span><svg width="17" height="17.5" viewBox="0 0 17 17.500" style="position:absolute;left:225px;top:119.600px"><g fill="none" stroke="#6f6f6f" stroke-linejoin="round" stroke-linecap="round"><path d="M1.300 15.400 A8.100 9.600 0 0 1 9.300 6.200 A8.100 9.600 0 0 1 14.500 8.200" stroke-width="1.900"/><path d="M9.100 6 V3" stroke-width="1.800"/><path d="M0.900 16.300 H7.200" stroke-width="1.900"/></g><circle cx="9.100" cy="2.100" r="1.700" fill="#6f6f6f"/><circle cx="11.300" cy="11.300" r="5.700" fill="#fff"/><circle cx="11.300" cy="11.300" r="4.900" fill="#6f6f6f"/><path d="M8.900 11.400 L10.600 13.100 L13.700 9.600" fill="none" stroke="#fff" stroke-width="1.600" stroke-linecap="round" stroke-linejoin="round"/></svg><span class="t green k7" style="left:250.00px;top:121.90px;font-size:15.5px;letter-spacing:0.608px;-webkit-text-stroke:.3px currentColor;">500,000</span><svg width="13.5" height="12.5" viewBox="0 0 13.200 12.200" style="position:absolute;left:223.500px;top:149px"><g fill="none" stroke="#707070" stroke-width="1.3" stroke-linejoin="round" stroke-linecap="round"><circle cx="4.200" cy="4.500" r="2.300"/><path d="M0.700 11.800 C0.700 9 2.200 7.800 4.200 7.800 C6.200 7.800 7.700 9 7.700 11.800"/><circle cx="9.900" cy="2.900" r="2"/><path d="M8.300 6.200 C10.900 5.700 12.500 7 12.500 9.600"/></g></svg><div class="abs" style="left:242px;top:147.200px;width:25px;height:15.600px;border-radius:4px;background:#e0f3eb"></div><span class="t green md k8" style="left:246.50px;top:149.20px;font-size:12.8px;letter-spacing:0.850px;-webkit-text-stroke-width:.2px">05</span><div class="abs" style="left:271px;top:147.200px;width:100px;height:15.600px;border-radius:8px;background:linear-gradient(90deg,#e0f3eb 0,#e0f3eb 54%,#f1f2f6 63%,#f1f2f6 100%)"></div></div>
<div class="card" style="left:1001px;top:947px"><div class="gb"><i></i><span class="t green md k1" style="left:43.90px;top:13.27px;font-size:13.5px;letter-spacing:-0.050px;-webkit-text-stroke-width:.6px">ĐANG PHỤC VỤ</span><span class="t green md k2" style="left:25.15px;top:59.60px;font-size:23.5px;letter-spacing:-0.192px;-webkit-text-stroke-width:.85px">V.I.P-1</span><span class="t green k3" style="left:104.65px;top:65.40px;font-size:15.5px;letter-spacing:-0.038px;">A-1 | C-6</span></div><div class="btn" style="left:10px;background:#f1f2f6"><svg width="6" height="16.5" viewBox="0 0 6 16.500" style="left:17px;top:11.550px"><g fill="none" stroke="#767676" stroke-width="1.250"><circle cx="3" cy="2.700" r="1.550"/><circle cx="3" cy="8.250" r="1.550"/><circle cx="3" cy="13.800" r="1.550"/></g></svg></div><div class="btn" style="left:60px;background:#e0f3eb"><svg width="16" height="15" viewBox="0 0 16 15" style="left:12px;top:12.400px"><g fill="none" stroke="#49ad87" stroke-width="1.3" stroke-linejoin="round"><path d="M6.8 2.5 V10.899999999999999 A4.3 1.9 0 0 0 15.399999999999999 10.899999999999999 V2.5 A4.3 1.9 0 0 0 6.8 2.5 Z" fill="#e0f3eb"/><ellipse cx="11.1" cy="2.5" rx="4.3" ry="1.9" fill="#e0f3eb"/><path d="M6.8 5.3 A4.3 1.9 0 0 0 15.399999999999999 5.3"/><path d="M6.8 8.1 A4.3 1.9 0 0 0 15.399999999999999 8.1"/><path d="M0.7000000000000002 7.9 V13.3 A4.3 1.9 0 0 0 9.3 13.3 V7.9 A4.3 1.9 0 0 0 0.7000000000000002 7.9 Z" fill="#e0f3eb"/><ellipse cx="5" cy="7.9" rx="4.3" ry="1.9" fill="#e0f3eb"/><path d="M0.7000000000000002 10.600000000000001 A4.3 1.9 0 0 0 9.3 10.600000000000001"/></g></svg></div><div class="btn" style="left:110px;background:#f1f2f6"><svg width="18" height="18" viewBox="0 0 20 20" style="left:11px;top:11px"><g fill="none" stroke="#fff" stroke-width="2.5" stroke-linejoin="round" stroke-linecap="round"><path d="M5.500 6.500 V4 A2.500 2.500 0 0 1 8 1.500 H12 A2.500 2.500 0 0 1 14.500 4 V6.500"/><path d="M5 15.5 H4 A3 3 0 0 1 1 12.5 V9.500 A3 3 0 0 1 4 6.500 H16 A3 3 0 0 1 19 9.500 V12.5 A3 3 0 0 1 16 15.5 H15"/><rect x="5" y="11.5" width="10" height="7" rx="2"/><path d="M14 9.300 H15.500"/></g></svg></div><div class="btn" style="left:160px;background:#e0f3eb"><svg width="16.5" height="17.5" viewBox="0 0 16 17" style="left:12.500px;top:11.600px"><g fill="none" stroke="#49ad87" stroke-width="1.4" stroke-linejoin="round" stroke-linecap="round"><path d="M6 15.300 H3.300 A2.300 2.300 0 0 1 1 13 V3.300 A2.300 2.300 0 0 1 3.300 1 H10 A2.300 2.300 0 0 1 12.300 3.300 V7"/><path d="M4.300 4.300 H8.800"/><path d="M4.300 7.600 H8.300 V10"/></g><circle cx="10.200" cy="11.200" r="5.300" fill="#e0f3eb"/><circle cx="10.200" cy="11.200" r="4.300" fill="#49ad87"/><path d="M8.200 11.200 L9.700 12.700 L12.300 9.800" fill="none" stroke="#e0f3eb" stroke-width="1.400" stroke-linecap="round" stroke-linejoin="round"/></svg></div><span class="t green md k4" style="left:222.35px;top:13.70px;font-size:32.5px;letter-spacing:1.144px;-webkit-text-stroke-width:1.05px">21,300,000</span><svg width="15" height="17.5" viewBox="0 0 15 17.200" style="position:absolute;left:226px;top:60.500px"><g fill="none" stroke="#707070" stroke-width="1.7" stroke-linejoin="round" stroke-linecap="round"><path d="M9.300 16.300 H3.800 A2.800 2.800 0 0 1 1 13.500 V3.800 A2.800 2.800 0 0 1 3.800 1 H11.2 A2.800 2.800 0 0 1 14 3.800 V11.6 Z"/><path d="M9.300 16.300 V13.400 A1.800 1.800 0 0 1 11.100 11.600 H14"/><path d="M4.300 4.600 H10.200 M4.300 7.600 H8.200"/></g></svg><span class="t gray k5" style="left:250.00px;top:63.20px;font-size:16px;letter-spacing:0.417px;">#002130102022</span><svg width="18" height="18" viewBox="0 0 18 18" style="position:absolute;left:225px;top:90px"><g fill="none" stroke="#707070" stroke-width="1.9" stroke-linejoin="round" stroke-linecap="round"><circle cx="9" cy="9" r="8"/><path d="M9 4.800 V9.400 L12 11"/></g></svg><span class="t gray k6" style="left:250.10px;top:93.20px;font-size:16px;letter-spacing:0.375px;">90:44</span><svg width="17" height="17.5" viewBox="0 0 17 17.500" style="position:absolute;left:225px;top:119.600px"><g fill="none" stroke="#6f6f6f" stroke-linejoin="round" stroke-linecap="round"><path d="M1.300 15.400 A8.100 9.600 0 0 1 9.300 6.200 A8.100 9.600 0 0 1 14.500 8.200" stroke-width="1.900"/><path d="M9.100 6 V3" stroke-width="1.800"/><path d="M0.900 16.300 H7.200" stroke-width="1.900"/></g><circle cx="9.100" cy="2.100" r="1.700" fill="#6f6f6f"/><circle cx="11.300" cy="11.300" r="5.700" fill="#fff"/><circle cx="11.300" cy="11.300" r="4.900" fill="#6f6f6f"/><path d="M8.900 11.400 L10.600 13.100 L13.700 9.600" fill="none" stroke="#fff" stroke-width="1.600" stroke-linecap="round" stroke-linejoin="round"/></svg><span class="t green k7" style="left:250.00px;top:121.90px;font-size:15.5px;letter-spacing:0.608px;-webkit-text-stroke:.3px currentColor;">500,000</span><svg width="13.5" height="12.5" viewBox="0 0 13.200 12.200" style="position:absolute;left:223.500px;top:149px"><g fill="none" stroke="#707070" stroke-width="1.3" stroke-linejoin="round" stroke-linecap="round"><circle cx="4.200" cy="4.500" r="2.300"/><path d="M0.700 11.800 C0.700 9 2.200 7.800 4.200 7.800 C6.200 7.800 7.700 9 7.700 11.800"/><circle cx="9.900" cy="2.900" r="2"/><path d="M8.300 6.200 C10.900 5.700 12.500 7 12.500 9.600"/></g></svg><div class="abs" style="left:242px;top:147.200px;width:25px;height:15.600px;border-radius:4px;background:#e0f3eb"></div><span class="t green md k8" style="left:246.50px;top:149.20px;font-size:12.8px;letter-spacing:0.850px;-webkit-text-stroke-width:.2px">05</span><div class="abs" style="left:271px;top:147.200px;width:100px;height:15.600px;border-radius:8px;background:linear-gradient(90deg,#e0f3eb 0,#e0f3eb 54%,#f1f2f6 63%,#f1f2f6 100%)"></div></div>
</div>
</body></html>
